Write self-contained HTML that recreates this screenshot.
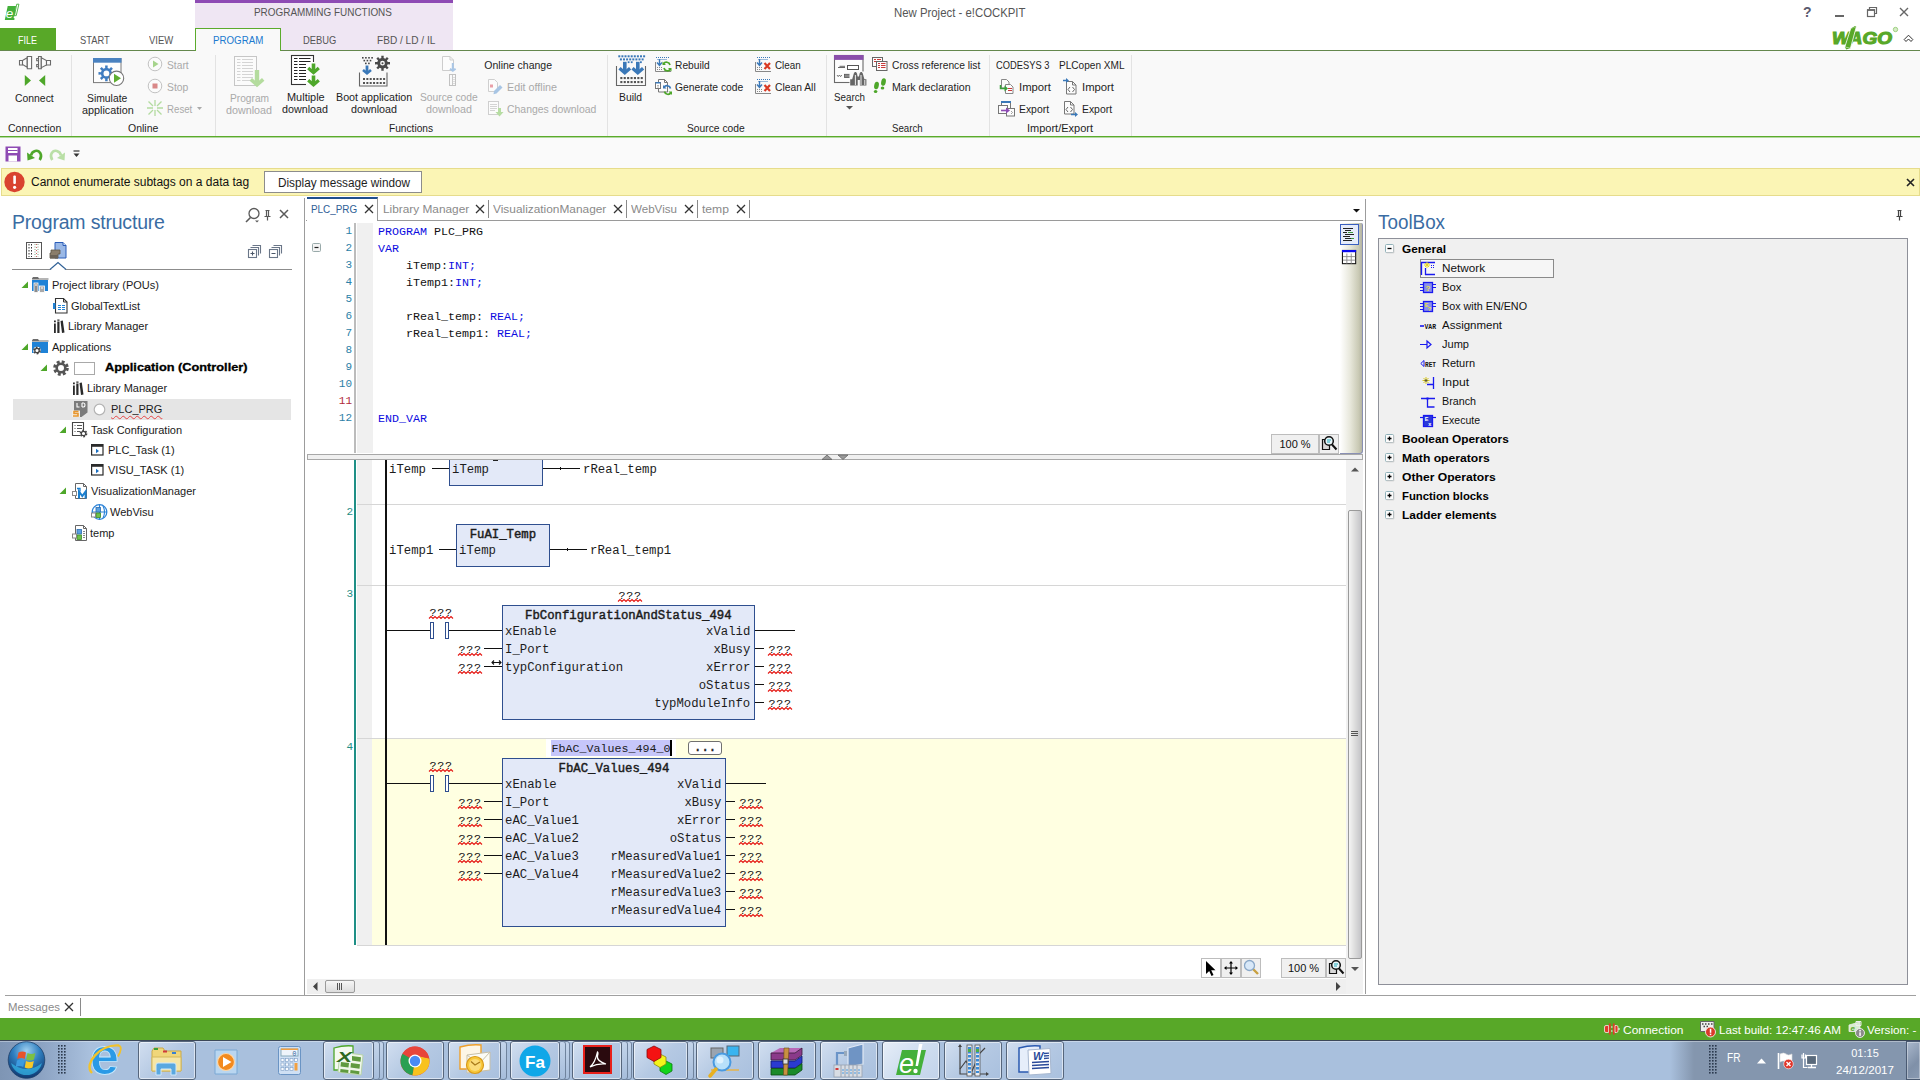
<!DOCTYPE html>
<html lang="en">
<head>
<meta charset="utf-8">
<title>New Project - e!COCKPIT</title>
<style>
*{box-sizing:border-box;margin:0;padding:0}
html,body{width:1920px;height:1080px;overflow:hidden;background:#fff}
body{position:relative;font-family:"Liberation Sans",sans-serif;font-size:12px;color:#222}
.a{position:absolute;white-space:nowrap}
.t{position:absolute;white-space:nowrap;line-height:14px;font-size:12px;color:#1e1e1e;transform:scaleX(.9);transform-origin:0 0}
.t.c{transform-origin:50% 0}
.g{color:#a9a9a9}
.c{text-align:center}
.mono{font-family:"Liberation Mono",monospace}
svg{position:absolute;overflow:visible}
/* ribbon */
#ribbon{left:0;top:51px;width:1920px;height:87px;background:#f9f9f9;border-bottom:1px solid #b4d9a0;box-shadow:inset 0 -1px 0 #5bab2c}
.rsep{position:absolute;top:55px;width:1px;height:81px;background:#e3e3e3}
.tab{position:absolute;top:33px;font-size:12px;line-height:14px;color:#555;white-space:nowrap;transform:scaleX(.84);transform-origin:0 0}
.grp{position:absolute;top:121px;font-size:12px;line-height:14px;color:#1e1e1e;white-space:nowrap;text-align:center;transform:scaleX(.9)}
/* code */
.ln{position:absolute;left:321px;width:31px;text-align:right;font-family:"Liberation Mono",monospace;font-size:11px;line-height:17px;color:#2b7fa8}
.cl{position:absolute;left:378px;font-family:"Liberation Mono",monospace;font-size:11.67px;line-height:17px;color:#111;white-space:pre}
.kw{color:#0c0ce0}
.lt{position:absolute;font-family:"Liberation Mono",monospace;font-size:12.3px;line-height:16px;color:#1c1c1c;white-space:pre}
.q{position:absolute;font-family:"Liberation Mono",monospace;font-size:11.67px;letter-spacing:.8px;line-height:16px;color:#111;white-space:pre}
.tr{position:absolute;font-size:11px;line-height:14px;color:#1a1a1a;white-space:nowrap}
.tb{position:absolute;font-size:11.5px;line-height:14px;color:#111;white-space:nowrap}
.tbb{position:absolute;font-size:11.5px;line-height:14px;color:#000;white-space:nowrap;font-weight:bold}
</style>
</head>
<body>
<!-- TITLE BAR -->
<div class="a" id="ctx" style="left:195px;top:0;width:258px;height:51px;background:#efe6f3;border-top:3px solid #8e4bb4"></div>
<div class="a" style="left:0;top:50px;width:1920px;height:1px;background:#64874d"></div>
<!-- tabs -->
<div class="a" style="left:0;top:28px;width:56px;height:22px;background:#58a828"></div>
<div class="a" style="left:195px;top:28px;width:86px;height:23px;background:#f9f9f9;border:1px solid #5bab2c;border-bottom:none"></div>
<!-- RIBBON BODY -->
<div class="a" id="ribbon"></div>
<!--RICONS-START--><div class="rsep" style="left:71px"></div>
<div class="rsep" style="left:215px"></div>
<div class="rsep" style="left:607px"></div>
<div class="rsep" style="left:826px"></div>
<div class="rsep" style="left:989px"></div>
<div class="rsep" style="left:1131px"></div>
<svg style="left:0;top:51px" width="1140" height="86" viewBox="0 51 1140 86"><g fill="#fbfbfb" stroke="#6a6a6a" stroke-width="1.100"><path d="M19.500 60.500h3v4.500h-3z"/><path d="M22.500 60.500l4.700-2.700v9.400l-4.700-2.700z"/><path d="M27.300 56.500h4.300v12.200h-4.300z"/><path d="M38.500 56.500h2.800v12.200h-2.800z"/><path d="M36.700 58.500h1.800v2.200h-1.800zM36.700 64.500h1.800v2.200h-1.800z"/><path d="M41.300 57.800l5.200 2.700v4.500l-5.200 2.700z"/><path d="M46.500 60.500h4v4.500h-4z"/></g><path d="M24.800 75v11l6.200-5.500z M45.200 75v11l-6.200-5.500z" fill="#4ea72a"/><rect x="93.500" y="58.600" width="27.500" height="24" fill="#fdfdfd" stroke="#7a7a7a"/><rect x="93" y="58" width="28.500" height="4.700" fill="#4a82c0"/><path d="M111.87 72.20 L114.30 72.11 L114.30 74.69 L111.87 74.60 L111.12 76.42 L112.90 78.07 L111.07 79.90 L109.42 78.12 L107.60 78.87 L107.69 81.30 L105.11 81.30 L105.20 78.87 L103.38 78.12 L101.73 79.90 L99.90 78.07 L101.68 76.42 L100.93 74.60 L98.50 74.69 L98.50 72.11 L100.93 72.20 L101.68 70.38 L99.90 68.73 L101.73 66.90 L103.38 68.68 L105.20 67.93 L105.11 65.50 L107.69 65.50 L107.60 67.93 L109.42 68.68 L111.07 66.90 L112.90 68.73 L111.12 70.38z M109.30 73.40 A2.9 2.9 0 1 0 103.50 73.40 A2.9 2.9 0 1 0 109.30 73.40z" fill="#3f7cc0" fill-rule="evenodd"/><circle cx="116.500" cy="78.300" r="7.200" fill="#fff" stroke="#777" stroke-width="1.100"/><path d="M114 73.800v9l7-4.500z" fill="#5fae30"/><rect x="234.500" y="56.500" width="22" height="29" fill="#fbfbfb" stroke="#c6c6c6"/><g stroke="#d4d4d4" stroke-width="1"><path d="M237 59.500h3.500M242 59.500h11"/><path d="M237 62.500h3.500M242 62.500h11"/><path d="M237 65.500h3.500M242 65.500h11"/><path d="M237 68.500h3.500M242 68.500h11"/><path d="M237 71.500h3.500M242 71.500h11"/><path d="M237 74.500h3.500M242 74.500h11"/><path d="M237 77.500h3.500M242 77.500h11"/><path d="M237 80.500h3.500M242 80.500h11"/></g><rect x="254.80" y="70.00" width="4.4" height="14.50" fill="#b4dc9e"/><path d="M250.80 79.30L257.00 84.80L263.20 79.30" fill="none" stroke="#b4dc9e" stroke-width="3.6"/><rect x="291.500" y="55.500" width="22" height="29" fill="#fff" stroke="#333" stroke-width="1.100"/><g stroke="#222" stroke-width="1.100"><path d="M294 58.500h3.500M299 58.500h11.500"/><path d="M294 61.500h3.500M299 61.500h11.500"/><path d="M294 64.500h3.500M299 64.500h11.500"/><path d="M294 67.500h3.500M299 67.500h11.500"/><path d="M294 70.500h3.500M299 70.500h11.500"/><path d="M294 73.500h3.500M299 73.500h11.500"/><path d="M294 76.500h3.500M299 76.500h11.500"/><path d="M294 79.500h3.500M299 79.500h11.500"/></g><rect x="306" y="62" width="15" height="25" fill="#f9f9f9"/><rect x="306" y="62" width="7.500" height="22" fill="#fff"/><rect x="311.70" y="63.50" width="3.6" height="8.80" fill="#4ea72a"/><path d="M308.20 68.00L313.50 72.60L318.80 68.00" fill="none" stroke="#4ea72a" stroke-width="3.2"/><rect x="311.70" y="75.50" width="3.6" height="9.00" fill="#4ea72a"/><path d="M308.20 80.20L313.50 84.80L318.80 80.20" fill="none" stroke="#4ea72a" stroke-width="3.2"/><rect x="362.00" y="57.0" width="1.6" height="1.6" fill="#444"/><rect x="365.10" y="57.0" width="1.6" height="1.6" fill="#444"/><rect x="368.20" y="57.0" width="1.6" height="1.6" fill="#444"/><rect x="371.30" y="57.0" width="1.6" height="1.6" fill="#444"/><rect x="363.50" y="59.8" width="1.6" height="1.6" fill="#444"/><rect x="366.60" y="59.8" width="1.6" height="1.6" fill="#444"/><rect x="369.70" y="59.8" width="1.6" height="1.6" fill="#444"/><rect x="365.00" y="62.6" width="1.6" height="1.6" fill="#444"/><rect x="368.10" y="62.6" width="1.6" height="1.6" fill="#444"/><rect x="365.60" y="65.50" width="2.8" height="7.50" fill="#3a78b8"/><path d="M363.00 70.00L367.00 73.30L371.00 70.00" fill="none" stroke="#3a78b8" stroke-width="2.6"/><path d="M387.68 62.06 L390.00 61.97 L390.00 64.43 L387.68 64.34 L386.96 66.06 L388.67 67.64 L386.94 69.37 L385.36 67.66 L383.64 68.38 L383.73 70.70 L381.27 70.70 L381.36 68.38 L379.64 67.66 L378.06 69.37 L376.33 67.64 L378.04 66.06 L377.32 64.34 L375.00 64.43 L375.00 61.97 L377.32 62.06 L378.04 60.34 L376.33 58.76 L378.06 57.03 L379.64 58.74 L381.36 58.02 L381.27 55.70 L383.73 55.70 L383.64 58.02 L385.36 58.74 L386.94 57.03 L388.67 58.76 L386.96 60.34z M384.90 63.20 A2.4 2.4 0 1 0 380.10 63.20 A2.4 2.4 0 1 0 384.90 63.20z" fill="#4a4a4a" fill-rule="evenodd"/><circle cx="382.500" cy="63.200" r="1" fill="#4a4a4a"/><path d="M359.500 72.500V86h27.500V72.500" fill="none" stroke="#666" stroke-width="1.100"/><rect x="363.00" y="78" width="2" height="2" fill="#555"/><rect x="366.35" y="78" width="2" height="2" fill="#555"/><rect x="369.70" y="78" width="2" height="2" fill="#555"/><rect x="373.05" y="78" width="2" height="2" fill="#555"/><rect x="376.40" y="78" width="2" height="2" fill="#555"/><rect x="379.75" y="78" width="2" height="2" fill="#555"/><rect x="383.10" y="78" width="2" height="2" fill="#555"/><rect x="363.00" y="82" width="2" height="2" fill="#555"/><rect x="366.35" y="82" width="2" height="2" fill="#555"/><rect x="369.70" y="82" width="2" height="2" fill="#555"/><rect x="373.05" y="82" width="2" height="2" fill="#555"/><rect x="376.40" y="82" width="2" height="2" fill="#555"/><rect x="379.75" y="82" width="2" height="2" fill="#555"/><rect x="383.10" y="82" width="2" height="2" fill="#555"/><path d="M442.500 56.500h7.500l3.500 3.500v10.500h-11z" fill="#fcfcfc" stroke="#cdcdcd"/><path d="M450 56.500v3.500h3.500" fill="none" stroke="#cdcdcd"/><rect x="451.80" y="63.00" width="2" height="7.50" fill="#a9c6e6"/><path d="M450.00 68.70L452.80 70.80L455.60 68.70" fill="none" stroke="#a9c6e6" stroke-width="2"/><rect x="449.500" y="74.500" width="6" height="11" fill="#fafafa" stroke="#c2c2c2"/><path d="M452.500 75v10" stroke="#c8c8c8"/><path d="M453 77.500h2M453 79.500h2M453 81.500h2M453 83.500h2" stroke="#d0d0d0" stroke-width=".7"/><rect x="618.30" y="55.3" width="2" height="2" fill="#3a78b8"/><rect x="621.40" y="55.3" width="2" height="2" fill="#3a78b8"/><rect x="624.50" y="55.3" width="2" height="2" fill="#3a78b8"/><rect x="627.60" y="55.3" width="2" height="2" fill="#3a78b8"/><rect x="630.70" y="55.3" width="2" height="2" fill="#3a78b8"/><rect x="633.80" y="55.3" width="2" height="2" fill="#3a78b8"/><rect x="636.90" y="55.3" width="2" height="2" fill="#3a78b8"/><rect x="640.00" y="55.3" width="2" height="2" fill="#3a78b8"/><rect x="643.10" y="55.3" width="2" height="2" fill="#3a78b8"/><rect x="619.90" y="58.4" width="2" height="2" fill="#3a78b8"/><rect x="623.00" y="58.4" width="2" height="2" fill="#3a78b8"/><rect x="626.10" y="58.4" width="2" height="2" fill="#3a78b8"/><rect x="629.20" y="58.4" width="2" height="2" fill="#3a78b8"/><rect x="632.30" y="58.4" width="2" height="2" fill="#3a78b8"/><rect x="635.40" y="58.4" width="2" height="2" fill="#3a78b8"/><rect x="638.50" y="58.4" width="2" height="2" fill="#3a78b8"/><rect x="641.60" y="58.4" width="2" height="2" fill="#3a78b8"/><rect x="627.70" y="61.3" width="1.8" height="1.8" fill="#3a78b8"/><rect x="630.80" y="61.3" width="1.8" height="1.8" fill="#3a78b8"/><rect x="640.00" y="61.3" width="1.8" height="1.8" fill="#3a78b8"/><rect x="623.00" y="61.80" width="3.6" height="10.70" fill="#3a78b8"/><path d="M619.50 68.20L624.80 72.80L630.10 68.20" fill="none" stroke="#3a78b8" stroke-width="3.3"/><rect x="636.00" y="61.80" width="3.6" height="10.70" fill="#3a78b8"/><path d="M632.50 68.20L637.80 72.80L643.10 68.20" fill="none" stroke="#3a78b8" stroke-width="3.3"/><path d="M616.500 66V85.500h29V66" fill="none" stroke="#666" stroke-width="1.100"/><rect x="620.30" y="77" width="2.1" height="2.1" fill="#555"/><rect x="623.70" y="77" width="2.1" height="2.1" fill="#555"/><rect x="627.10" y="77" width="2.1" height="2.1" fill="#555"/><rect x="630.50" y="77" width="2.1" height="2.1" fill="#555"/><rect x="633.90" y="77" width="2.1" height="2.1" fill="#555"/><rect x="637.30" y="77" width="2.1" height="2.1" fill="#555"/><rect x="640.70" y="77" width="2.1" height="2.1" fill="#555"/><rect x="620.30" y="81" width="2.1" height="2.1" fill="#555"/><rect x="623.70" y="81" width="2.1" height="2.1" fill="#555"/><rect x="627.10" y="81" width="2.1" height="2.1" fill="#555"/><rect x="630.50" y="81" width="2.1" height="2.1" fill="#555"/><rect x="633.90" y="81" width="2.1" height="2.1" fill="#555"/><rect x="637.30" y="81" width="2.1" height="2.1" fill="#555"/><rect x="640.70" y="81" width="2.1" height="2.1" fill="#555"/><rect x="834.500" y="55.500" width="28.500" height="27" fill="#fdfdfd" stroke="#6a6a6a" stroke-width="1.100"/><rect x="834" y="55" width="29.500" height="4.900" fill="#8a4fab"/><path d="M838 67.500h7M839.500 66.300h5.500" stroke="#555" stroke-width=".9"/><rect x="847.500" y="65.500" width="11" height="4" fill="#fff" stroke="#555" stroke-width="1"/><path d="M837 75l1.200 1.600 1.200-1.600 1.200 1.600 1.200-1.600" fill="none" stroke="#555" stroke-width=".8"/><rect x="844.500" y="74.300" width="6.500" height="3.200" fill="#8a8a8a" stroke="#555" stroke-width=".8"/><rect x="849.500" y="71.500" width="17" height="15" fill="#f9f9f9"/><path d="M850.200 85.600v-6.300h2l1.600-5.800 1-1.500h1.200l1 1.500.6 3h1.400l.6-3 1-1.500h1.200l1 1.500 1.600 5.800h2v6.300h-6.500v-5.500h-2.200v5.500z" fill="#666"/><path d="M855.400 75v10M861 75v10M864.800 80v5" stroke="#fff" stroke-width=".9"/></svg>
<svg style="left:147px;top:56px" width="16" height="16" viewBox="0 0 16 16"><circle cx="8" cy="8" r="6.800" fill="#fbfbfb" stroke="#c2c2c2"/><path d="M6 4.500v7l5.500-3.500z" fill="#a6d48c"/></svg>
<svg style="left:147px;top:78px" width="16" height="16" viewBox="0 0 16 16"><circle cx="8" cy="8" r="6.800" fill="#fbfbfb" stroke="#c2c2c2"/><rect x="5.500" y="5.500" width="5" height="5" fill="#d98888"/></svg>
<svg style="left:147px;top:100px" width="16" height="16" viewBox="0 0 16 16"><g stroke="#b3dba0" stroke-width="1.300"><path d="M8 0v6M8 10v6M0 8h6M10 8h6M1.500 1.500l4.500 4.500M10 10l4.500 4.500M14.500 1.500l-4.500 4.500M6 10l-4.500 4.500"/></g></svg>
<svg style="left:197px;top:107px" width="6" height="4"><path d="M0 0h5l-2.500 3z" fill="#aaa"/></svg>
<svg style="left:487px;top:78px" width="18" height="18" viewBox="0 0 18 18"><path d="M1.500 1.500h6l3 3v9h-9z" fill="#fcfcfc" stroke="#cfcfcf"/><rect x="3" y="6.500" width="3" height="3" fill="#e9a0a8"/><path d="M7 13l6-6 2.500 2.500-6 6-3 .8z" fill="#a8c5e4"/></svg>
<svg style="left:487px;top:100px" width="18" height="18" viewBox="0 0 18 18"><rect x="1.500" y="1.500" width="10" height="13" fill="#fcfcfc" stroke="#cfcfcf"/><path d="M3 4.500h7M3 6.500h7M3 8.500h7M3 10.500h5" stroke="#d4d4d4"/><path d="M11 8h3v4h2.500l-4 4.500-4-4.500H11z" fill="#b7dda3"/></svg>
<svg style="left:846px;top:106px" width="8" height="4"><path d="M0 0h7l-3.500 3.500z" fill="#555"/></svg>

<svg style="left:655px;top:56px" width="17" height="17" viewBox="0 0 17 17"><path d="M1 1.500h13M2.500 3.500h10" stroke="#3a78b8" stroke-dasharray="1 1"/><path d="M4.500 3v6M2 6.500l2.500 3 2.500-3" fill="none" stroke="#3a78b8" stroke-width="1.400"/><path d="M.5 6v9.500h15.500" fill="none" stroke="#888"/><path d="M2 11.500h5M2 13.500h5" stroke="#888" stroke-dasharray="1 1"/><path d="M15 9a3.500 3.500 0 0 0-6.500-1M9 12a3.500 3.500 0 0 0 6.500 1" fill="none" stroke="#4ea72a" stroke-width="1.700"/><path d="M7.500 5.500v3.500h3.500zM16.500 15.500v-3.500h-3.500z" fill="#4ea72a"/></svg>
<svg style="left:655px;top:78px" width="17" height="17" viewBox="0 0 17 17"><path d="M3.500 1.500h6l3 3v9.500h-9z" fill="#fcfcfc" stroke="#777"/><path d="M9.500 1.500v3h3" fill="none" stroke="#777"/><rect x=".5" y="4.500" width="5" height="6" fill="#fff" stroke="#777"/><rect x=".5" y="4" width="5" height="1.500" fill="#3a78b8"/><path d="M2 7.500h2M2 9h2" stroke="#999" stroke-width=".7"/><path d="M15.500 10.500a3.500 3.500 0 0 0-6.500-1" fill="none" stroke="#3a78b8" stroke-width="1.700"/><path d="M9.500 13.500a3.500 3.500 0 0 0 6.500 1" fill="none" stroke="#4ea72a" stroke-width="1.700"/><path d="M8 7v3.500h3.500z" fill="#3a78b8"/><path d="M17 17v-3.500h-3.500z" fill="#4ea72a"/></svg>
<svg style="left:754px;top:56px" width="17" height="17" viewBox="0 0 17 17"><path d="M3 1.500h13M4.500 3.500h10" stroke="#3a78b8" stroke-dasharray="1 1"/><path d="M5.500 3v6M3 6.500l2.500 3 2.500-3" fill="none" stroke="#3a78b8" stroke-width="1.400"/><path d="M1.500 6v9.500h15.500" fill="none" stroke="#888"/><path d="M3 11.500h5M3 13.500h5" stroke="#888" stroke-dasharray="1 1"/><path d="M10.500 7l5.500 6M16 7l-5.500 6" stroke="#d93a24" stroke-width="2.200"/></svg>
<svg style="left:754px;top:78px" width="17" height="17" viewBox="0 0 17 17"><path d="M3 1.500h13M4.500 3.500h10" stroke="#3a78b8" stroke-dasharray="1 1"/><path d="M5.500 3v6M3 6.500l2.500 3 2.500-3" fill="none" stroke="#3a78b8" stroke-width="1.400"/><path d="M1.500 6v9.500h15.500" fill="none" stroke="#888"/><path d="M3 11.500h5M3 13.500h5" stroke="#888" stroke-dasharray="1 1"/><path d="M10.500 7l5.500 6M16 7l-5.500 6" stroke="#d93a24" stroke-width="2.200"/></svg>
<svg style="left:872px;top:56px" width="17" height="16" viewBox="0 0 17 16"><rect x=".5" y="1.500" width="10" height="9" fill="#fcfcfc" stroke="#666"/><path d="M2 3.500h2M5 3.500h4M2 5.500h2" stroke="#c83a3a"/><rect x="4.500" y="5.500" width="10.500" height="9" fill="#fcfcfc" stroke="#666"/><path d="M6 7.500h2M9 7.500h4.500M6 9.500h2M9 9.500h4.500M6 11.500h2M9 11.500h4.500" stroke="#c83a3a"/></svg>
<svg style="left:873px;top:78px" width="15" height="16" viewBox="0 0 15 16"><ellipse cx="3.500" cy="7.500" rx="2.300" ry="3.800" fill="#4ea72a" transform="rotate(12 3.500 7.500)"/><ellipse cx="2.600" cy="13.500" rx="1.800" ry="1.600" fill="#4ea72a"/><ellipse cx="10.500" cy="4" rx="2.300" ry="3.800" fill="#4ea72a" transform="rotate(12 10.500 4)"/><ellipse cx="9.500" cy="10" rx="1.800" ry="1.600" fill="#4ea72a"/></svg>
<svg style="left:999px;top:78px" width="17" height="17" viewBox="0 0 17 17"><path d="M2.500 1.500h5l2.500 2.500v6h-7.500z" fill="#fcfcfc" stroke="#888"/><path d="M6.500 6.500h5l2.500 2.500v6.500h-7.500z" fill="#fcfcfc" stroke="#888"/><path d="M9 10.500h4M9 12.500h4" stroke="#c83a3a" stroke-width="1.200"/><path d="M1.500 7v3.500h5" fill="none" stroke="#3aa03a" stroke-width="1.500"/><path d="M5.500 7.500l3.500 3-3.500 3z" fill="#3aa03a"/></svg>
<svg style="left:998px;top:100px" width="18" height="17" viewBox="0 0 18 17"><rect x="3.500" y="1.500" width="9" height="7" fill="#fcfcfc" stroke="#777"/><rect x="3" y="1" width="10" height="2" fill="#3a78b8"/><rect x=".5" y="5.500" width="9" height="8" fill="#fcfcfc" stroke="#777"/><rect x="8.500" y="8.500" width="8" height="7.500" fill="#fcfcfc" stroke="#777"/><path d="M3 10.500h6" stroke="#8e4bb4" stroke-width="1.600"/><path d="M8 7.500l4 3-4 3z" fill="#8e4bb4"/><path d="M13 11l1.500 1.500L13 14" fill="none" stroke="#888" stroke-width=".8"/></svg>
<svg style="left:1062px;top:78px" width="17" height="17" viewBox="0 0 17 17"><path d="M4.500 3.500h6l3.500 3.500v9h-9.500z" fill="#fcfcfc" stroke="#777"/><path d="M10.500 3.500v3.500h3.500" fill="none" stroke="#777"/><path d="M8 9l-2 2.500 2 2.500M10.500 9l2 2.500-2 2.500" fill="none" stroke="#666" stroke-width="1"/><path d="M1 2.500h4" stroke="#3a78b8" stroke-width="1.500"/><path d="M4 0l3 2.500-3 2.500z" fill="#3a78b8"/></svg>
<svg style="left:1062px;top:100px" width="17" height="17" viewBox="0 0 17 17"><path d="M2.500 1.500h6l3.500 3.500v9h-9.500z" fill="#fcfcfc" stroke="#777"/><path d="M8.500 1.500v3.500h3.500" fill="none" stroke="#777"/><path d="M6 7l-2 2.500 2 2.500M8.500 7l2 2.500-2 2.500" fill="none" stroke="#666" stroke-width="1"/><path d="M9 14.500h5" stroke="#3a78b8" stroke-width="1.500"/><path d="M13 12l3 2.500-3 2.500z" fill="#3a78b8"/></svg>

<!--RICONS-END--><!--RTEXT-START--><div class="a" style="left:254.3px;top:5px;font-size:11.3px;line-height:14px;color:#555;transform:scaleX(0.879);transform-origin:0 0">PROGRAMMING FUNCTIONS</div>
<div class="a" style="left:894.3px;top:6px;font-size:12.5px;line-height:14px;color:#555;transform:scaleX(0.91);transform-origin:0 0">New Project - e!COCKPIT</div>
<div class="a" style="left:18.3px;top:33px;font-size:11.3px;line-height:14px;color:#fff;transform:scaleX(0.796);transform-origin:0 0">FILE</div>
<div class="a" style="left:79.7px;top:33px;font-size:11.3px;line-height:14px;color:#555;transform:scaleX(0.825);transform-origin:0 0">START</div>
<div class="a" style="left:149.0px;top:33px;font-size:11.3px;line-height:14px;color:#555;transform:scaleX(0.841);transform-origin:0 0">VIEW</div>
<div class="a" style="left:213.0px;top:33px;font-size:11.3px;line-height:14px;color:#2079cf;transform:scaleX(0.861);transform-origin:0 0">PROGRAM</div>
<div class="a" style="left:302.7px;top:33px;font-size:11.3px;line-height:14px;color:#555;transform:scaleX(0.829);transform-origin:0 0">DEBUG</div>
<div class="a" style="left:377.0px;top:33px;font-size:11.3px;line-height:14px;color:#555;transform:scaleX(0.893);transform-origin:0 0">FBD / LD / IL</div>
<div class="a" style="left:15.3px;top:91px;font-size:10.5px;line-height:14px;color:#1e1e1e;transform:scaleX(0.99);transform-origin:0 0">Connect</div>
<div class="a" style="left:8.3px;top:121px;font-size:10.5px;line-height:14px;color:#1e1e1e;transform:scaleX(1.003);transform-origin:0 0">Connection</div>
<div class="a" style="left:87.3px;top:91px;font-size:10.5px;line-height:14px;color:#1e1e1e;transform:scaleX(0.987);transform-origin:0 0">Simulate</div>
<div class="a" style="left:82.3px;top:103px;font-size:10.5px;line-height:14px;color:#1e1e1e;transform:scaleX(1.03);transform-origin:0 0">application</div>
<div class="a" style="left:167.3px;top:58px;font-size:10.5px;line-height:14px;color:#a9a9a9;transform:scaleX(0.979);transform-origin:0 0">Start</div>
<div class="a" style="left:167.3px;top:80px;font-size:10.5px;line-height:14px;color:#a9a9a9;transform:scaleX(0.986);transform-origin:0 0">Stop</div>
<div class="a" style="left:167.3px;top:102px;font-size:10.5px;line-height:14px;color:#a9a9a9;transform:scaleX(0.922);transform-origin:0 0">Reset</div>
<div class="a" style="left:128.3px;top:121px;font-size:10.5px;line-height:14px;color:#1e1e1e;transform:scaleX(0.998);transform-origin:0 0">Online</div>
<div class="a" style="left:229.7px;top:91px;font-size:10.5px;line-height:14px;color:#a9a9a9;transform:scaleX(0.969);transform-origin:0 0">Program</div>
<div class="a" style="left:226.3px;top:103px;font-size:10.5px;line-height:14px;color:#a9a9a9;transform:scaleX(1.023);transform-origin:0 0">download</div>
<div class="a" style="left:286.7px;top:90px;font-size:10.5px;line-height:14px;color:#1e1e1e;transform:scaleX(1.042);transform-origin:0 0">Multiple</div>
<div class="a" style="left:282.3px;top:102px;font-size:10.5px;line-height:14px;color:#1e1e1e;transform:scaleX(1.023);transform-origin:0 0">download</div>
<div class="a" style="left:335.7px;top:90px;font-size:10.5px;line-height:14px;color:#1e1e1e;transform:scaleX(1.021);transform-origin:0 0">Boot application</div>
<div class="a" style="left:350.8px;top:102px;font-size:10.5px;line-height:14px;color:#1e1e1e;transform:scaleX(1.023);transform-origin:0 0">download</div>
<div class="a" style="left:420.3px;top:90px;font-size:10.5px;line-height:14px;color:#a9a9a9;transform:scaleX(0.979);transform-origin:0 0">Source code</div>
<div class="a" style="left:426.2px;top:102px;font-size:10.5px;line-height:14px;color:#a9a9a9;transform:scaleX(1.023);transform-origin:0 0">download</div>
<div class="a" style="left:484.3px;top:58px;font-size:10.5px;line-height:14px;color:#1e1e1e;transform:scaleX(1.0);transform-origin:0 0">Online change</div>
<div class="a" style="left:507.3px;top:80px;font-size:10.5px;line-height:14px;color:#a9a9a9;transform:scaleX(1.024);transform-origin:0 0">Edit offline</div>
<div class="a" style="left:507.3px;top:102px;font-size:10.5px;line-height:14px;color:#a9a9a9;transform:scaleX(0.993);transform-origin:0 0">Changes download</div>
<div class="a" style="left:388.7px;top:121px;font-size:10.5px;line-height:14px;color:#1e1e1e;transform:scaleX(0.967);transform-origin:0 0">Functions</div>
<div class="a" style="left:619.3px;top:90px;font-size:10.5px;line-height:14px;color:#1e1e1e;transform:scaleX(0.985);transform-origin:0 0">Build</div>
<div class="a" style="left:675.3px;top:58px;font-size:10.5px;line-height:14px;color:#1e1e1e;transform:scaleX(0.975);transform-origin:0 0">Rebuild</div>
<div class="a" style="left:675.3px;top:80px;font-size:10.5px;line-height:14px;color:#1e1e1e;transform:scaleX(0.983);transform-origin:0 0">Generate code</div>
<div class="a" style="left:775.3px;top:58px;font-size:10.5px;line-height:14px;color:#1e1e1e;transform:scaleX(0.937);transform-origin:0 0">Clean</div>
<div class="a" style="left:775.3px;top:80px;font-size:10.5px;line-height:14px;color:#1e1e1e;transform:scaleX(0.982);transform-origin:0 0">Clean All</div>
<div class="a" style="left:687.3px;top:121px;font-size:10.5px;line-height:14px;color:#1e1e1e;transform:scaleX(0.979);transform-origin:0 0">Source code</div>
<div class="a" style="left:834.3px;top:90px;font-size:10.5px;line-height:14px;color:#1e1e1e;transform:scaleX(0.932);transform-origin:0 0">Search</div>
<div class="a" style="left:892.3px;top:58px;font-size:10.5px;line-height:14px;color:#1e1e1e;transform:scaleX(0.976);transform-origin:0 0">Cross reference list</div>
<div class="a" style="left:892.3px;top:80px;font-size:10.5px;line-height:14px;color:#1e1e1e;transform:scaleX(1.014);transform-origin:0 0">Mark declaration</div>
<div class="a" style="left:892.3px;top:121px;font-size:10.5px;line-height:14px;color:#1e1e1e;transform:scaleX(0.923);transform-origin:0 0">Search</div>
<div class="a" style="left:996.0px;top:58px;font-size:10.5px;line-height:14px;color:#1e1e1e;transform:scaleX(0.888);transform-origin:0 0">CODESYS 3</div>
<div class="a" style="left:1059.4px;top:58px;font-size:10.5px;line-height:14px;color:#1e1e1e;transform:scaleX(0.959);transform-origin:0 0">PLCopen XML</div>
<div class="a" style="left:1018.7px;top:80px;font-size:10.5px;line-height:14px;color:#1e1e1e;transform:scaleX(1.075);transform-origin:0 0">Import</div>
<div class="a" style="left:1019.0px;top:102px;font-size:10.5px;line-height:14px;color:#1e1e1e;transform:scaleX(0.989);transform-origin:0 0">Export</div>
<div class="a" style="left:1081.7px;top:80px;font-size:10.5px;line-height:14px;color:#1e1e1e;transform:scaleX(1.075);transform-origin:0 0">Import</div>
<div class="a" style="left:1082.0px;top:102px;font-size:10.5px;line-height:14px;color:#1e1e1e;transform:scaleX(0.989);transform-origin:0 0">Export</div>
<div class="a" style="left:1026.7px;top:121px;font-size:10.5px;line-height:14px;color:#1e1e1e;transform:scaleX(1.047);transform-origin:0 0">Import/Export</div>
<!--RTEXT-END--><svg style="left:4px;top:3px" width="17" height="18" viewBox="0 0 17 18"><path d="M3.700 3h8.300l-1.700 14H.8z" fill="#44b03a"/><text x="1.800" y="14.600" font-size="13" font-style="italic" fill="#fff" font-family="Liberation Sans,sans-serif" textLength="7.500" lengthAdjust="spacingAndGlyphs">e</text><path d="M12.700 1.200h2.200l-2.700 11.500h-1.700z" fill="#fff" stroke="#44b03a" stroke-width=".9"/><circle cx="10.600" cy="14.300" r="1" fill="#fff"/></svg>
<div class="a" style="left:1803px;top:4px;font-size:14px;line-height:16px;font-weight:bold;color:#5a5a6e">?</div>
<div class="a" style="left:1835px;top:15px;width:9px;height:2px;background:#666"></div>
<svg style="left:1866px;top:6px" width="12" height="12" viewBox="0 0 12 12"><path d="M3.500 3.500v-2h7v6h-2" fill="none" stroke="#666" stroke-width="1.200"/><rect x="1.500" y="4" width="7" height="6.500" fill="#fff" stroke="#666" stroke-width="1.200"/><path d="M1 4h8" stroke="#666" stroke-width="1.600"/></svg>
<svg style="left:1899px;top:7px" width="10" height="10" viewBox="0 0 10 10"><path d="M1 1l8 8M9 1l-8 8" stroke="#666" stroke-width="1.400"/></svg>
<svg style="left:1830px;top:25px" width="70" height="26" viewBox="0 0 70 26"><text x="2" y="19" font-size="16.500" font-weight="bold" font-style="italic" fill="#58a828" stroke="#58a828" stroke-width="1.100" font-family="Liberation Sans,sans-serif" textLength="60" lengthAdjust="spacingAndGlyphs">WAGO</text><path d="M20.800 3.200l5.600-1.600-6 21.800-5.600-1.400z" fill="#58a828" stroke="#fff" stroke-width=".8"/><path d="M21 3.400l4-2.400 1.200 1zM20.200 23l-3.800 1.600-1.600-2.400z" fill="#58a828"/><circle cx="65.500" cy="4.500" r="2.200" fill="#d6ebc8" stroke="#8cc86a" stroke-width=".8"/></svg>
<svg style="left:1903px;top:34px" width="11" height="9" viewBox="0 0 11 9"><path d="M1.200 5.500L5.500 1.200 9.800 5.500 8 7.500 5.500 5 3 7.500z" fill="#fff" stroke="#333" stroke-width="1"/></svg>
<!--RIBBON-END-->
<!-- QUICK ACCESS -->
<div class="a" style="left:0;top:138px;width:1920px;height:30px;background:#fafafa"></div>
<svg style="left:5px;top:146px" width="16" height="16" viewBox="0 0 16 16"><rect x=".5" y=".5" width="15" height="15" fill="#8e4bb4"/><rect x="3" y="2" width="9.500" height="5" fill="#fff"/><path d="M3 4.500h9.500" stroke="#8e4bb4" stroke-width="1"/><rect x="3.500" y="9.500" width="8.500" height="6" fill="#fff"/><rect x="5" y="11" width="2" height="3.500" fill="#8e4bb4" opacity=".0"/></svg>
<svg style="left:27px;top:146px" width="17" height="16" viewBox="0 0 17 16"><path d="M4 9.500C5 4.500 11 3 13.500 7.500c1 2 .5 4.500-.8 6.500" fill="none" stroke="#4ea72a" stroke-width="2.600"/><path d="M0 6.500l8 5.500-7.500 2.500z" fill="#4ea72a"/></svg>
<svg style="left:48px;top:146px" width="17" height="16" viewBox="0 0 17 16"><path d="M13 9.500C12 4.500 6 3 3.500 7.500c-1 2-.5 4.500.8 6.500" fill="none" stroke="#b9dfa6" stroke-width="2.600"/><path d="M17 6.500l-8 5.500 7.500 2.500z" fill="#b9dfa6"/></svg>
<svg style="left:73px;top:150px" width="8" height="8" viewBox="0 0 8 8"><path d="M.5 1h6" stroke="#333" stroke-width="1.200"/><path d="M.5 3.500h6L3.500 7z" fill="#333"/></svg>

<!-- YELLOW BAR -->
<div class="a" style="left:1px;top:168px;width:1919px;height:28px;background:#fbf5b5;border:1px solid #e6dc8c"></div>
<svg style="left:4px;top:171px" width="22" height="22" viewBox="0 0 22 22"><circle cx="10.500" cy="11" r="10.200" fill="#d9432f"/><rect x="9.300" y="4.500" width="2.600" height="8.500" rx="1" fill="#fff"/><circle cx="10.600" cy="16.300" r="1.600" fill="#fff"/></svg>
<div class="a" style="left:31px;top:175px;font-size:12px;line-height:14px;color:#111">Cannot enumerate subtags on a data tag</div>
<div class="a" style="left:264px;top:171px;width:158px;height:22px;background:#fff;border:1px solid #8c8c8c"></div>
<div class="a" style="left:277.500px;top:176px;font-size:12.500px;line-height:15px;color:#1e1e1e;transform:scaleX(0.941);transform-origin:0 0">Display message window</div>
<svg style="left:1906px;top:178px" width="9" height="9" viewBox="0 0 9 9"><path d="M1 1l7 7M8 1l-7 7" stroke="#222" stroke-width="1.600"/></svg>

<!-- LEFT PANEL -->
<div class="a" style="left:304px;top:198px;width:1px;height:797px;background:#9c9c9c"></div>
<div class="a" style="left:12px;top:209px;font-size:20px;line-height:26px;color:#3a6ca3;transform:scaleX(.975);transform-origin:0 0;letter-spacing:-0.2px">Program structure</div>
<svg style="left:245px;top:207px" width="46" height="16" viewBox="0 0 46 16"><circle cx="9" cy="6.500" r="5" fill="none" stroke="#5a5a5a" stroke-width="1.300"/><path d="M5.500 10.500L1 15" stroke="#5a5a5a" stroke-width="1.600"/><path d="M10 13.500h4l-2 2z" fill="#5a5a5a"/><path d="M20.500 3.500h4M21.500 3.500v6M23.500 3.500v6M19.500 9.500h6M22.500 9.500v4" stroke="#5a5a5a" stroke-width="1.200" fill="none"/><path d="M35 3l8 8M43 3l-8 8" stroke="#5a5a5a" stroke-width="1.500"/></svg>
<!-- toolbar icons -->
<svg style="left:26px;top:242px" width="16" height="17" viewBox="0 0 16 17"><rect x=".5" y=".5" width="15" height="16" fill="#fff" stroke="#555"/><path d="M3 2v13M5.500 2v13" stroke="#333" stroke-dasharray="1.500 1.500"/><path d="M9 2v13M12 2v13" stroke="#8a8" stroke-dasharray="1 1.500"/><path d="M10.500 2v13" stroke="#c66" stroke-dasharray="1 2"/></svg>
<svg style="left:49px;top:241px" width="18" height="19" viewBox="0 0 18 19"><path d="M6 1.500h8l3 3v12.500H6z" fill="#9ab8e6" stroke="#2a5cb8"/><path d="M14 1.500v3h3" fill="#cfe0f6" stroke="#2a5cb8"/><path d="M2 9h9v4h-2v4H1v-5h1z" fill="#8a7d6b" stroke="#5e5548" stroke-width=".8"/><rect x="1" y="14" width="8" height="3.500" fill="#6b6257"/></svg>
<svg style="left:247px;top:244px" width="36" height="15" viewBox="0 0 36 15"><g fill="#fff" stroke="#6a7688" stroke-width="1.100"><path d="M5.500 1.500h8v8"/><path d="M3.500 3.500h8v8"/><rect x="1.500" y="5.500" width="8" height="8"/><path d="M26.500 1.500h8v8"/><path d="M24.500 3.500h8v8"/><rect x="22.500" y="5.500" width="8" height="8"/></g><path d="M3.500 9.500h4M5.500 7.500v4M24.500 9.500h4" stroke="#4a5668" stroke-width="1.100"/></svg>
<div class="a" style="left:12px;top:269px;width:280px;height:1px;background:#8c8c8c"></div>
<svg style="left:50px;top:261px" width="16" height="10" viewBox="0 0 16 10"><path d="M0 8.500l8-7 8 7" fill="#fff" stroke="#2f6096" stroke-width="1.200"/><path d="M1.500 8.500h13" stroke="#fff" stroke-width="1.500"/></svg>
<!-- tree -->
<div class="a" style="left:13px;top:399px;width:278px;height:21px;background:#e5e5e5"></div>
<svg style="left:21px;top:281px" width="8" height="8"><path d="M7 .5V7H.5z" fill="#4ea72a"/></svg>
<svg style="left:31px;top:276px" width="18" height="18" viewBox="0 0 18 18"><path d="M1 2.500l1-1.500h5l1 1.500h9.500v1H1z" fill="#6d6d6d"/><rect x="1" y="4" width="16" height="11" fill="#1f82d6"/><rect x="3" y="7" width="4" height="9.500" fill="#8c8c8c" stroke="#fff" stroke-width=".8"/><rect x="8.500" y="10" width="5" height="6.500" fill="#a9a9a9" stroke="#fff" stroke-width=".8"/><path d="M4 9h2M10 12h2" stroke="#fff"/></svg>
<div class="tr" style="left:52px;top:278px">Project library (POUs)</div>
<svg style="left:52px;top:297px" width="17" height="18" viewBox="0 0 17 18"><path d="M3.500 1.500h8l3.500 3.500v11h-11.500z" fill="#fff" stroke="#333" stroke-width="1.100"/><path d="M11.500 1.500v3.500h3.500" fill="none" stroke="#333"/><rect x="1" y="6" width="2.500" height="6" fill="#1f82d6"/><path d="M6 8.500h3M10 8.500h3M6 10.500h3M10 10.500h3M6 12.500h3M10 12.500h3" stroke="#1f82d6" stroke-width="1.200"/></svg>
<div class="tr" style="left:71px;top:299px">GlobalTextList</div>
<svg style="left:53px;top:319px" width="12" height="15" viewBox="0 0 12 15"><path d="M1 4.500h1.800v9.500H1zM1 1.500h1.800v1.800H1zM4.300 2.500h2.200v11.500H4.300zM4.300 0.500h2.200v1.200H4.300z M7.500 2l2.300-.5 1.700 12-2.500.5z" fill="#2a2a2a"/></svg>
<div class="tr" style="left:68px;top:319px">Library Manager</div>
<svg style="left:21px;top:343px" width="8" height="8"><path d="M7 .5V7H.5z" fill="#4ea72a"/></svg>
<svg style="left:31px;top:338px" width="18" height="18" viewBox="0 0 18 18"><path d="M1 2.500l1-1.500h5l1 1.500h9.500v1H1z" fill="#6d6d6d"/><rect x="1" y="4" width="16" height="11" fill="#1f82d6"/><circle cx="6" cy="12.500" r="3.800" fill="#fff"/><circle cx="6" cy="12.500" r="2.600" fill="none" stroke="#444" stroke-width="2.600" stroke-dasharray="1.500 1.220"/><circle cx="6" cy="12.500" r="2.200" fill="#fff" stroke="#444" stroke-width="1.300"/></svg>
<div class="tr" style="left:52px;top:340px">Applications</div>
<svg style="left:40px;top:364px" width="8" height="8"><path d="M7 .5V7H.5z" fill="#4ea72a"/></svg>
<svg style="left:52px;top:359px" width="18" height="18" viewBox="0 0 18 18"><circle cx="9" cy="9" r="5.800" fill="none" stroke="#555" stroke-width="4" stroke-dasharray="2.600 1.950"/><circle cx="9" cy="9" r="4.300" fill="none" stroke="#555" stroke-width="2.600"/></svg>
<div class="a" style="left:74px;top:362px;width:21px;height:13px;background:#fff;border:1px solid #a9a9a9"></div>
<div class="tr" style="left:105px;top:360px;font-weight:bold;font-size:11.500px;color:#000;transform:scaleX(1.110);transform-origin:0 0;-webkit-text-stroke:.3px #000">Application (Controller)</div>
<svg style="left:72px;top:381px" width="12" height="15" viewBox="0 0 12 15"><path d="M1 4.500h1.800v9.500H1zM1 1.500h1.800v1.800H1zM4.300 2.500h2.200v11.500H4.300zM4.300 0.500h2.200v1.200H4.300z M7.500 2l2.300-.5 1.700 12-2.500.5z" fill="#2a2a2a"/></svg>
<div class="tr" style="left:87px;top:381px">Library Manager</div>
<svg style="left:71px;top:400px" width="18" height="18" viewBox="0 0 18 18"><path d="M3 1h13.500v11.500l-6 4.500H8v-6H3z" fill="#7b7b7b"/><path d="M1 10.500h8v6.500H1z" fill="#f5f0e6"/><path d="M7.500 11.500h-4.500v2h4v2.500h-5" fill="none" stroke="#e8962e" stroke-width="1.600"/><path d="M6 3v4h2.500M11 3v4M11 3h1.500q1.500 0 1.500 2t-1.500 2H11" fill="none" stroke="#fff" stroke-width="1.100"/></svg>
<svg style="left:93px;top:403px" width="13" height="13"><circle cx="6.500" cy="6.500" r="5.300" fill="#fff" stroke="#b5b5b5" stroke-width="1.200"/></svg>
<div class="tr" style="left:111px;top:402px;text-decoration:underline wavy #e64545 1px;text-underline-offset:2px">PLC_PRG</div>
<svg style="left:59px;top:426px" width="8" height="8"><path d="M7 .5V7H.5z" fill="#4ea72a"/></svg>
<svg style="left:71px;top:421px" width="18" height="18" viewBox="0 0 18 18"><path d="M1.500 1.500h11v13h-11z" fill="#fff" stroke="#444" stroke-width="1.100"/><path d="M3.500 4.500h1M6 4.500h5M3.500 7.500h1M6 7.500h5M3.500 10.500h1M6 10.500h3" stroke="#555"/><circle cx="12.500" cy="12.500" r="3.600" fill="#fff"/><circle cx="12.500" cy="12.500" r="2.700" fill="none" stroke="#444" stroke-width="2.400" stroke-dasharray="1.500 1.330"/><circle cx="12.500" cy="12.500" r="2.200" fill="#fff" stroke="#444" stroke-width="1.200"/></svg>
<div class="tr" style="left:91px;top:423px">Task Configuration</div>
<svg style="left:91px;top:444px" width="13" height="12" viewBox="0 0 13 12"><rect x=".6" y=".6" width="11.400" height="10.400" fill="#fff" stroke="#2a2a2a" stroke-width="1.200"/><rect x=".5" y=".5" width="11.500" height="2.300" fill="#2a2a2a"/><path d="M5 4.800v4.400l3-2.200z" fill="#1a6fc4"/></svg>
<div class="tr" style="left:108px;top:443px">PLC_Task (1)</div>
<svg style="left:91px;top:464px" width="13" height="12" viewBox="0 0 13 12"><rect x=".6" y=".6" width="11.400" height="10.400" fill="#fff" stroke="#2a2a2a" stroke-width="1.200"/><rect x=".5" y=".5" width="11.500" height="2.300" fill="#2a2a2a"/><path d="M5 4.800v4.400l3-2.200z" fill="#1a6fc4"/></svg>
<div class="tr" style="left:108px;top:463px">VISU_TASK (1)</div>
<svg style="left:59px;top:487px" width="8" height="8"><path d="M7 .5V7H.5z" fill="#4ea72a"/></svg>
<svg style="left:71px;top:482px" width="18" height="18" viewBox="0 0 18 18"><path d="M4.500 1.500h8l3 3v12h-11z" fill="#fff" stroke="#666" stroke-width="1"/><path d="M12.500 1.500v3h3" fill="none" stroke="#666"/><rect x="1.500" y="9.500" width="4" height="4" fill="#fff" stroke="#888"/><path d="M6 6.500h3v3" fill="none" stroke="#1a7fd0" stroke-width="1.300"/><path d="M8 16.500v-7l3.300 4.500 3.300-4.500v7" fill="none" stroke="#1a7fd0" stroke-width="2"/></svg>
<div class="tr" style="left:91px;top:484px">VisualizationManager</div>
<svg style="left:90px;top:503px" width="18" height="18" viewBox="0 0 18 18"><circle cx="9.500" cy="9" r="7.300" fill="#fff" stroke="#2a82d8" stroke-width="1.300"/><path d="M9.500 1.500v15M2.500 9h14M13 3q3 6 0 12" fill="none" stroke="#2a82d8" stroke-width="1.100"/><rect x="6" y="4.500" width="4.500" height="4.500" fill="#5aa0e0" stroke="#2a6cb0" stroke-width=".8"/><rect x="6" y="10" width="4.500" height="4.500" fill="#6fc04a" stroke="#3a8a2a" stroke-width=".8"/><rect x="1.500" y="10" width="4" height="4" fill="#fff" stroke="#888"/></svg>
<div class="tr" style="left:110px;top:505px">WebVisu</div>
<svg style="left:71px;top:524px" width="18" height="18" viewBox="0 0 18 18"><path d="M4.500 1.500h8l3 3v12h-11z" fill="#fff" stroke="#666" stroke-width="1"/><path d="M12.500 1.500v3h3" fill="none" stroke="#666"/><path d="M12 7.500h2M12 9.500h2M12 11.500h2M12 13.500h2" stroke="#888"/><rect x="6" y="5.500" width="4.500" height="4.500" fill="#5aa0e0" stroke="#2a6cb0" stroke-width=".8"/><rect x="6" y="11" width="4.500" height="4.500" fill="#6fc04a" stroke="#3a8a2a" stroke-width=".8"/><rect x="1.500" y="10" width="4" height="4" fill="#fff" stroke="#888"/></svg>
<div class="tr" style="left:90px;top:526px">temp</div>


<!-- EDITOR -->
<!--EDITOR-START--><div class="a" style="left:1365px;top:199px;width:1px;height:795px;background:#9c9c9c"></div>
<div class="a" style="left:306px;top:220px;width:1057px;height:1px;background:#9a9a9a"></div>
<div class="a" style="left:307px;top:197px;width:71px;height:24px;background:#fff;border-right:1px solid #9a9a9a;border-top:2px solid #1f4e8c"></div>
<div class="a" style="left:311.3px;top:202px;color:#2f6096;font-size:10.700px;line-height:14px;transform:scaleX(0.925);transform-origin:0 0">PLC_PRG</div>
<svg style="left:364px;top:204px" width="10" height="10" viewBox="0 0 10 10"><path d="M1 1l8 8M9 1l-8 8" stroke="#333" stroke-width="1.300"/></svg>
<div class="a" style="left:382.5px;top:202px;color:#8a8a8a;font-size:10.700px;line-height:14px;transform:scaleX(1.107);transform-origin:0 0">Library Manager</div>
<svg style="left:475px;top:204px" width="10" height="10" viewBox="0 0 10 10"><path d="M1 1l8 8M9 1l-8 8" stroke="#333" stroke-width="1.300"/></svg>
<div class="a" style="left:488px;top:200px;width:1px;height:18px;background:#8a8a8a"></div>
<div class="a" style="left:493.3px;top:202px;color:#8a8a8a;font-size:10.700px;line-height:14px;transform:scaleX(1.111);transform-origin:0 0">VisualizationManager</div>
<svg style="left:613px;top:204px" width="10" height="10" viewBox="0 0 10 10"><path d="M1 1l8 8M9 1l-8 8" stroke="#333" stroke-width="1.300"/></svg>
<div class="a" style="left:626px;top:200px;width:1px;height:18px;background:#8a8a8a"></div>
<div class="a" style="left:631.3px;top:202px;color:#8a8a8a;font-size:10.700px;line-height:14px;transform:scaleX(1.084);transform-origin:0 0">WebVisu</div>
<svg style="left:684px;top:204px" width="10" height="10" viewBox="0 0 10 10"><path d="M1 1l8 8M9 1l-8 8" stroke="#333" stroke-width="1.300"/></svg>
<div class="a" style="left:697px;top:200px;width:1px;height:18px;background:#8a8a8a"></div>
<div class="a" style="left:702.3px;top:202px;color:#8a8a8a;font-size:10.700px;line-height:14px;transform:scaleX(1.135);transform-origin:0 0">temp</div>
<svg style="left:736px;top:204px" width="10" height="10" viewBox="0 0 10 10"><path d="M1 1l8 8M9 1l-8 8" stroke="#333" stroke-width="1.300"/></svg>
<div class="a" style="left:749px;top:200px;width:1px;height:18px;background:#8a8a8a"></div>
<svg style="left:1353px;top:209px" width="8" height="4"><path d="M0 0h7l-3.500 3.500z" fill="#111"/></svg>
<div class="a" style="left:354px;top:223px;width:2px;height:230px;background:#bcbcbc"></div>
<div class="a" style="left:357px;top:223px;width:16px;height:230px;background:#f0f0f0"></div>
<svg style="left:312px;top:243px" width="10" height="10" viewBox="0 0 10 10"><rect x=".5" y=".5" width="8" height="8" rx="1" fill="#f4f4f4" stroke="#9aa"/><path d="M2.500 4.500h4" stroke="#222" stroke-width="1.200"/></svg>
<div class="ln" style="top:223px">1</div>
<div class="cl" style="top:224px"><span class="kw">PROGRAM</span> PLC_PRG</div>
<div class="ln" style="top:240px">2</div>
<div class="cl" style="top:241px"><span class="kw">VAR</span></div>
<div class="ln" style="top:257px">3</div>
<div class="cl" style="top:258px">    iTemp:<span class="kw">INT;</span></div>
<div class="ln" style="top:274px">4</div>
<div class="cl" style="top:275px">    iTemp1:<span class="kw">INT;</span></div>
<div class="ln" style="top:291px">5</div>
<div class="ln" style="top:308px">6</div>
<div class="cl" style="top:309px">    rReal_temp: <span class="kw">REAL;</span></div>
<div class="ln" style="top:325px">7</div>
<div class="cl" style="top:326px">    rReal_temp1: <span class="kw">REAL;</span></div>
<div class="ln" style="top:342px">8</div>
<div class="ln" style="top:359px">9</div>
<div class="ln" style="top:376px">10</div>
<div class="ln" style="top:393px;color:#b02a3a">11</div>
<div class="ln" style="top:410px">12</div>
<div class="cl" style="top:411px"><span class="kw">END_VAR</span></div>
<div class="a" style="left:1340px;top:223px;width:23px;height:231px;background:linear-gradient(90deg,#fff 0%,#e8e8dc 45%,#c9c9b4 85%,#b4b4a2 100%);border-right:1px solid #8a90b4;border-bottom:1px solid #8a90b4;border-radius:0 2px 3px 0"></div>
<div class="a" style="left:1340px;top:224px;width:19px;height:21px;background:#e6ecfa;border:1px solid #3a5fc0"></div>
<svg style="left:1342px;top:226px" width="15" height="17" viewBox="0 0 15 17"><path d="M1 2.500h10M3 4.500h6M1 6.500h4M3 8.500h9M1 10.500h7M3 12.500h6M1 14.500h9" stroke="#222" stroke-width="1"/><path d="M6 6.500h5M9 12.500h3" stroke="#3a9a3a"/></svg>
<svg style="left:1342px;top:250px" width="15" height="15" viewBox="0 0 17 17"><rect x=".5" y=".5" width="15" height="15" fill="#fff" stroke="#111" stroke-width="1.200"/><rect x="0" y="0" width="16" height="2.500" fill="#0a0af0"/><path d="M1 7.500h14M1 11.500h14M5.500 4v11.500M10.500 4v11.500" stroke="#888"/></svg>
<div class="a" style="left:1271px;top:434px;width:48px;height:20px;background:#f0f0f0;border:1px solid #bdbdbd"></div>
<div class="a c" style="left:1271px;top:438px;width:48px;font-size:11px;line-height:13px;color:#111">100 %</div>
<div class="a" style="left:1319px;top:434px;width:20px;height:20px;background:#f0f0f0;border:1px solid #bdbdbd"></div>
<svg style="left:1320px;top:435px" width="18" height="18" viewBox="0 0 18 18"><path d="M2.500 4.500h7v10h-7z" fill="#d8d8d8" stroke="#111" stroke-width="1.200"/><circle cx="9" cy="6" r="4.300" fill="#eaf6fa" stroke="#111" stroke-width="1.500"/><path d="M7 5h4M7 7h3" stroke="#2ab" stroke-width="1"/><path d="M12 9.500l4.500 5" stroke="#111" stroke-width="2"/></svg>
<div class="a" style="left:307px;top:454px;width:1056px;height:6px;background:#f0f0f0;border:1px solid #a8a8a8"></div>
<svg style="left:821px;top:454px" width="30" height="6" viewBox="0 0 30 6"><path d="M1 5.500l5-4.500 5 4.500z M17 1h10l-5 4.500z" fill="#9a9a9a" stroke="#666" stroke-width=".8"/></svg>
<!--LADDER-START--><div class="a" style="left:357px;top:460px;width:15px;height:485px;background:#f0f0f0"></div>
<div class="a" style="left:372px;top:739px;width:974px;height:206px;background:#ffffe1"></div>
<div class="a" style="left:354px;top:460px;width:2px;height:485px;background:#1f8f86"></div>
<div class="a" style="left:357px;top:504px;width:989px;height:1px;background:#d6d6d6"></div>
<div class="a" style="left:357px;top:585px;width:989px;height:1px;background:#d6d6d6"></div>
<div class="a" style="left:357px;top:738px;width:989px;height:1px;background:#d6d6d6"></div>
<div class="a" style="left:357px;top:945px;width:989px;height:1px;background:#d6d6d6"></div>
<div class="a" style="left:385px;top:460px;width:2px;height:485px;background:#111"></div>
<div class="a mono" style="left:340px;top:505px;width:13px;text-align:right;font-size:11px;line-height:14px;color:#1f8f86">2</div>
<div class="a mono" style="left:340px;top:587px;width:13px;text-align:right;font-size:11px;line-height:14px;color:#1f8f86">3</div>
<div class="a mono" style="left:340px;top:740px;width:13px;text-align:right;font-size:11px;line-height:14px;color:#1f8f86">4</div>
<div class="lt" style="top:462px;left:389.0px;">iTemp</div>
<div class="a" style="left:432px;top:468px;width:17px;height:1px;background:#111"></div>
<div class="a" style="left:449px;top:460px;width:94px;height:26px;background:#e3e9f8;border:1px solid #2f4f8f;border-top:none"></div>
<div class="a" style="left:493px;top:460px;width:5px;height:1px;background:#222"></div>
<div class="lt" style="top:462px;left:452.0px;">iTemp</div>
<div class="a" style="left:543px;top:468px;width:37px;height:1px;background:#111"></div>
<div class="a" style="left:560px;top:467px;width:1px;height:3px;background:#111"></div>
<div class="lt" style="top:462px;left:583.0px;">rReal_temp</div>
<div class="a" style="left:456px;top:524px;width:94px;height:43px;background:#e3e9f8;border:1px solid #2f4f8f"></div>
<div class="lt" style="top:527px;left:469.7px;-webkit-text-stroke:.45px #1c1c1c;">FuAI_Temp</div>
<div class="lt" style="top:543px;left:459.0px;">iTemp</div>
<div class="lt" style="top:543px;left:389.0px;">iTemp1</div>
<div class="a" style="left:439px;top:549px;width:17px;height:1px;background:#111"></div>
<div class="a" style="left:550px;top:549px;width:37px;height:1px;background:#111"></div>
<div class="a" style="left:567px;top:548px;width:1px;height:3px;background:#111"></div>
<div class="lt" style="top:543px;left:590.0px;">rReal_temp1</div>
<div class="q" style="left:618.5px;top:588px">???</div>
<svg style="left:618px;top:599px" width="24" height="3" viewBox="0 0 24 3"><path d="M0 2.500l2-2 2 2 2-2 2 2 2-2 2 2 2-2 2 2 2-2 2 2 2-2 2 2" fill="none" stroke="#e41410" stroke-width="1.100"/></svg>
<div class="a" style="left:502px;top:605px;width:253px;height:115px;background:#e3e9f8;border:1px solid #2f4f8f"></div>
<div class="lt" style="top:608px;left:525.0px;-webkit-text-stroke:.45px #1c1c1c;">FbConfigurationAndStatus_494</div>
<div class="lt" style="top:624px;left:505.0px;">xEnable</div>
<div class="lt" style="top:642px;left:505.0px;">I_Port</div>
<div class="lt" style="top:660px;left:505.0px;">typConfiguration</div>
<div class="lt" style="top:624px;left:706.1px;">xValid</div>
<div class="lt" style="top:642px;left:713.4px;">xBusy</div>
<div class="lt" style="top:660px;left:706.1px;">xError</div>
<div class="lt" style="top:678px;left:698.7px;">oStatus</div>
<div class="lt" style="top:696px;left:654.3px;">typModuleInfo</div>
<div class="a" style="left:386px;top:630px;width:44px;height:1px;background:#111"></div>
<div class="a" style="left:449px;top:630px;width:53px;height:1px;background:#111"></div>
<div class="a" style="left:430px;top:622px;width:4px;height:17px;background:#fff;border:1px solid #2f4f8f"></div>
<div class="a" style="left:445px;top:622px;width:4px;height:17px;background:#fff;border:1px solid #2f4f8f"></div>
<div class="q" style="left:429.5px;top:605px">???</div>
<svg style="left:429px;top:616px" width="24" height="3" viewBox="0 0 24 3"><path d="M0 2.500l2-2 2 2 2-2 2 2 2-2 2 2 2-2 2 2 2-2 2 2 2-2 2 2" fill="none" stroke="#e41410" stroke-width="1.100"/></svg>
<div class="q" style="left:458.5px;top:642px">???</div>
<svg style="left:458px;top:653px" width="24" height="3" viewBox="0 0 24 3"><path d="M0 2.500l2-2 2 2 2-2 2 2 2-2 2 2 2-2 2 2 2-2 2 2 2-2 2 2" fill="none" stroke="#e41410" stroke-width="1.100"/></svg>
<div class="a" style="left:484px;top:648px;width:18px;height:1px;background:#111"></div>
<div class="q" style="left:458.5px;top:660px">???</div>
<svg style="left:458px;top:671px" width="24" height="3" viewBox="0 0 24 3"><path d="M0 2.500l2-2 2 2 2-2 2 2 2-2 2 2 2-2 2 2 2-2 2 2 2-2 2 2" fill="none" stroke="#e41410" stroke-width="1.100"/></svg>
<div class="a" style="left:484px;top:666px;width:18px;height:1px;background:#111"></div>
<div class="a" style="left:755px;top:630px;width:40px;height:1px;background:#111"></div>
<div class="a" style="left:755px;top:648px;width:9px;height:1px;background:#111"></div>
<div class="q" style="left:768.5px;top:642px">???</div>
<svg style="left:768px;top:653px" width="24" height="3" viewBox="0 0 24 3"><path d="M0 2.500l2-2 2 2 2-2 2 2 2-2 2 2 2-2 2 2 2-2 2 2 2-2 2 2" fill="none" stroke="#e41410" stroke-width="1.100"/></svg>
<div class="a" style="left:755px;top:666px;width:9px;height:1px;background:#111"></div>
<div class="q" style="left:768.5px;top:660px">???</div>
<svg style="left:768px;top:671px" width="24" height="3" viewBox="0 0 24 3"><path d="M0 2.500l2-2 2 2 2-2 2 2 2-2 2 2 2-2 2 2 2-2 2 2 2-2 2 2" fill="none" stroke="#e41410" stroke-width="1.100"/></svg>
<div class="a" style="left:755px;top:684px;width:9px;height:1px;background:#111"></div>
<div class="q" style="left:768.5px;top:678px">???</div>
<svg style="left:768px;top:689px" width="24" height="3" viewBox="0 0 24 3"><path d="M0 2.500l2-2 2 2 2-2 2 2 2-2 2 2 2-2 2 2 2-2 2 2 2-2 2 2" fill="none" stroke="#e41410" stroke-width="1.100"/></svg>
<div class="a" style="left:755px;top:702px;width:9px;height:1px;background:#111"></div>
<div class="q" style="left:768.5px;top:696px">???</div>
<svg style="left:768px;top:707px" width="24" height="3" viewBox="0 0 24 3"><path d="M0 2.500l2-2 2 2 2-2 2 2 2-2 2 2 2-2 2 2 2-2 2 2 2-2 2 2" fill="none" stroke="#e41410" stroke-width="1.100"/></svg>
<svg style="left:491px;top:659px" width="11" height="7" viewBox="0 0 11 7"><path d="M1 3.500h9M3 1.500l-2 2 2 2M8 1.500l2 2-2 2" fill="none" stroke="#111" stroke-width="1.100"/></svg>
<div class="a" style="left:546px;top:739px;width:130px;height:18px;background:#fff"></div>
<div class="a" style="left:551px;top:740px;width:119px;height:16px;background:#c6c6fa"></div>
<div class="lt" style="left:551.5px;top:741px;font-size:11.67px">FbAC_Values_494_0</div>
<div class="a" style="left:670px;top:740px;width:2px;height:16px;background:#000"></div>
<div class="a" style="left:688px;top:741px;width:34px;height:14px;background:#fff;border:1px solid #707070;border-radius:3px"></div>
<div class="lt" style="top:740px;left:694.0px;-webkit-text-stroke:.45px #1c1c1c;">...</div>
<div class="a" style="left:502px;top:758px;width:224px;height:169px;background:#e3e9f8;border:1px solid #2f4f8f"></div>
<div class="lt" style="top:761px;left:558.6px;-webkit-text-stroke:.45px #1c1c1c;">FbAC_Values_494</div>
<div class="lt" style="top:777px;left:505.0px;">xEnable</div>
<div class="lt" style="top:795px;left:505.0px;">I_Port</div>
<div class="lt" style="top:813px;left:505.0px;">eAC_Value1</div>
<div class="lt" style="top:831px;left:505.0px;">eAC_Value2</div>
<div class="lt" style="top:849px;left:505.0px;">eAC_Value3</div>
<div class="lt" style="top:867px;left:505.0px;">eAC_Value4</div>
<div class="lt" style="top:777px;left:677.1px;">xValid</div>
<div class="lt" style="top:795px;left:684.4px;">xBusy</div>
<div class="lt" style="top:813px;left:677.1px;">xError</div>
<div class="lt" style="top:831px;left:669.7px;">oStatus</div>
<div class="lt" style="top:849px;left:610.5px;">rMeasuredValue1</div>
<div class="lt" style="top:867px;left:610.5px;">rMeasuredValue2</div>
<div class="lt" style="top:885px;left:610.5px;">rMeasuredValue3</div>
<div class="lt" style="top:903px;left:610.5px;">rMeasuredValue4</div>
<div class="a" style="left:386px;top:783px;width:44px;height:1px;background:#111"></div>
<div class="a" style="left:449px;top:783px;width:53px;height:1px;background:#111"></div>
<div class="a" style="left:430px;top:775px;width:4px;height:17px;background:#fff;border:1px solid #2f4f8f"></div>
<div class="a" style="left:445px;top:775px;width:4px;height:17px;background:#fff;border:1px solid #2f4f8f"></div>
<div class="q" style="left:429.5px;top:758px">???</div>
<svg style="left:429px;top:769px" width="24" height="3" viewBox="0 0 24 3"><path d="M0 2.500l2-2 2 2 2-2 2 2 2-2 2 2 2-2 2 2 2-2 2 2 2-2 2 2" fill="none" stroke="#e41410" stroke-width="1.100"/></svg>
<div class="q" style="left:458.5px;top:795px">???</div>
<svg style="left:458px;top:806px" width="24" height="3" viewBox="0 0 24 3"><path d="M0 2.500l2-2 2 2 2-2 2 2 2-2 2 2 2-2 2 2 2-2 2 2 2-2 2 2" fill="none" stroke="#e41410" stroke-width="1.100"/></svg>
<div class="a" style="left:484px;top:801px;width:18px;height:1px;background:#111"></div>
<div class="q" style="left:458.5px;top:813px">???</div>
<svg style="left:458px;top:824px" width="24" height="3" viewBox="0 0 24 3"><path d="M0 2.500l2-2 2 2 2-2 2 2 2-2 2 2 2-2 2 2 2-2 2 2 2-2 2 2" fill="none" stroke="#e41410" stroke-width="1.100"/></svg>
<div class="a" style="left:484px;top:819px;width:18px;height:1px;background:#111"></div>
<div class="q" style="left:458.5px;top:831px">???</div>
<svg style="left:458px;top:842px" width="24" height="3" viewBox="0 0 24 3"><path d="M0 2.500l2-2 2 2 2-2 2 2 2-2 2 2 2-2 2 2 2-2 2 2 2-2 2 2" fill="none" stroke="#e41410" stroke-width="1.100"/></svg>
<div class="a" style="left:484px;top:837px;width:18px;height:1px;background:#111"></div>
<div class="q" style="left:458.5px;top:849px">???</div>
<svg style="left:458px;top:860px" width="24" height="3" viewBox="0 0 24 3"><path d="M0 2.500l2-2 2 2 2-2 2 2 2-2 2 2 2-2 2 2 2-2 2 2 2-2 2 2" fill="none" stroke="#e41410" stroke-width="1.100"/></svg>
<div class="a" style="left:484px;top:855px;width:18px;height:1px;background:#111"></div>
<div class="q" style="left:458.5px;top:867px">???</div>
<svg style="left:458px;top:878px" width="24" height="3" viewBox="0 0 24 3"><path d="M0 2.500l2-2 2 2 2-2 2 2 2-2 2 2 2-2 2 2 2-2 2 2 2-2 2 2" fill="none" stroke="#e41410" stroke-width="1.100"/></svg>
<div class="a" style="left:484px;top:873px;width:18px;height:1px;background:#111"></div>
<div class="a" style="left:726px;top:783px;width:40px;height:1px;background:#111"></div>
<div class="a" style="left:726px;top:801px;width:9px;height:1px;background:#111"></div>
<div class="q" style="left:739.5px;top:795px">???</div>
<svg style="left:739px;top:806px" width="24" height="3" viewBox="0 0 24 3"><path d="M0 2.500l2-2 2 2 2-2 2 2 2-2 2 2 2-2 2 2 2-2 2 2 2-2 2 2" fill="none" stroke="#e41410" stroke-width="1.100"/></svg>
<div class="a" style="left:726px;top:819px;width:9px;height:1px;background:#111"></div>
<div class="q" style="left:739.5px;top:813px">???</div>
<svg style="left:739px;top:824px" width="24" height="3" viewBox="0 0 24 3"><path d="M0 2.500l2-2 2 2 2-2 2 2 2-2 2 2 2-2 2 2 2-2 2 2 2-2 2 2" fill="none" stroke="#e41410" stroke-width="1.100"/></svg>
<div class="a" style="left:726px;top:837px;width:9px;height:1px;background:#111"></div>
<div class="q" style="left:739.5px;top:831px">???</div>
<svg style="left:739px;top:842px" width="24" height="3" viewBox="0 0 24 3"><path d="M0 2.500l2-2 2 2 2-2 2 2 2-2 2 2 2-2 2 2 2-2 2 2 2-2 2 2" fill="none" stroke="#e41410" stroke-width="1.100"/></svg>
<div class="a" style="left:726px;top:855px;width:9px;height:1px;background:#111"></div>
<div class="q" style="left:739.5px;top:849px">???</div>
<svg style="left:739px;top:860px" width="24" height="3" viewBox="0 0 24 3"><path d="M0 2.500l2-2 2 2 2-2 2 2 2-2 2 2 2-2 2 2 2-2 2 2 2-2 2 2" fill="none" stroke="#e41410" stroke-width="1.100"/></svg>
<div class="a" style="left:726px;top:873px;width:9px;height:1px;background:#111"></div>
<div class="q" style="left:739.5px;top:867px">???</div>
<svg style="left:739px;top:878px" width="24" height="3" viewBox="0 0 24 3"><path d="M0 2.500l2-2 2 2 2-2 2 2 2-2 2 2 2-2 2 2 2-2 2 2 2-2 2 2" fill="none" stroke="#e41410" stroke-width="1.100"/></svg>
<div class="a" style="left:726px;top:891px;width:9px;height:1px;background:#111"></div>
<div class="q" style="left:739.5px;top:885px">???</div>
<svg style="left:739px;top:896px" width="24" height="3" viewBox="0 0 24 3"><path d="M0 2.500l2-2 2 2 2-2 2 2 2-2 2 2 2-2 2 2 2-2 2 2 2-2 2 2" fill="none" stroke="#e41410" stroke-width="1.100"/></svg>
<div class="a" style="left:726px;top:909px;width:9px;height:1px;background:#111"></div>
<div class="q" style="left:739.5px;top:903px">???</div>
<svg style="left:739px;top:914px" width="24" height="3" viewBox="0 0 24 3"><path d="M0 2.500l2-2 2 2 2-2 2 2 2-2 2 2 2-2 2 2 2-2 2 2 2-2 2 2" fill="none" stroke="#e41410" stroke-width="1.100"/></svg>
<div class="a" style="left:1346px;top:460px;width:17px;height:534px;background:#f1f1f1"></div>
<svg style="left:1351px;top:467px" width="8" height="5"><path d="M0 4.500L4 .5 8 4.500z" fill="#555"/></svg>
<div class="a" style="left:1348px;top:510px;width:14px;height:449px;background:linear-gradient(90deg,#f4f4f4,#dcdcdc 50%,#c4c4c8);border:1px solid #9a9a9a;border-radius:2px"></div>
<svg style="left:1351px;top:730px" width="8" height="8"><path d="M0 1.500h7M0 3.500h7M0 5.500h7" stroke="#555" stroke-width="1"/></svg>
<svg style="left:1351px;top:967px" width="8" height="5"><path d="M0 0h8L4 4z" fill="#555"/></svg>
<div class="a" style="left:1201px;top:958px;width:20px;height:20px;background:#fff;border:1px solid #bdbdbd"></div>
<div class="a" style="left:1221px;top:958px;width:20px;height:20px;background:#f0f0f0;border:1px solid #bdbdbd"></div>
<div class="a" style="left:1241px;top:958px;width:20px;height:20px;background:#f0f0f0;border:1px solid #bdbdbd"></div>
<svg style="left:1205px;top:960px" width="12" height="17" viewBox="0 0 12 17"><path d="M1 1v13l3.200-3 2.300 5 2-1-2.300-4.800H10.500z" fill="#000"/></svg>
<svg style="left:1224px;top:961px" width="14" height="14" viewBox="0 0 14 14"><path d="M7 1v12M1 7h12" stroke="#000" stroke-width="1.200"/><path d="M7 0l2 2.500H5zM7 14l2-2.500H5zM0 7l2.500-2v4zM14 7l-2.500-2v4z" fill="#000"/></svg>
<svg style="left:1243px;top:959px" width="17" height="17" viewBox="0 0 17 17"><path d="M9.500 9.500l5.500 5.500" stroke="#c8a040" stroke-width="2.400"/><circle cx="6.500" cy="6.500" r="5" fill="#d8e8f8" stroke="#8aa8c8" stroke-width="1.300"/></svg>
<div class="a" style="left:1281px;top:958px;width:45px;height:20px;background:#f0f0f0;border:1px solid #bdbdbd"></div>
<div class="a c" style="left:1281px;top:962px;width:45px;font-size:11px;line-height:13px;color:#111">100 %</div>
<div class="a" style="left:1326px;top:958px;width:20px;height:20px;background:#f0f0f0;border:1px solid #bdbdbd"></div>
<svg style="left:1327px;top:959px" width="18" height="18" viewBox="0 0 18 18"><path d="M2.500 4.500h7v10h-7z" fill="#d8d8d8" stroke="#111" stroke-width="1.200"/><circle cx="9" cy="6" r="4.300" fill="#eaf6fa" stroke="#111" stroke-width="1.500"/><path d="M7 5h4M7 7h3" stroke="#2ab" stroke-width="1"/><path d="M12 9.500l4.500 5" stroke="#111" stroke-width="2"/></svg>
<div class="a" style="left:307px;top:979px;width:1039px;height:15px;background:#efefef"></div>
<svg style="left:313px;top:982px" width="5" height="9"><path d="M4.500 0v9L0 4.500z" fill="#444"/></svg>
<div class="a" style="left:325px;top:980px;width:30px;height:13px;background:linear-gradient(#f6f6f6,#dcdcdc);border:1px solid #9a9a9a;border-radius:2px"></div>
<svg style="left:336px;top:983px" width="8" height="8"><path d="M1.500 0v7M3.500 0v7M5.500 0v7" stroke="#555" stroke-width="1"/></svg>
<svg style="left:1336px;top:982px" width="5" height="9"><path d="M0 0v9l4.500-4.500z" fill="#444"/></svg>
<!--LADDER-END-->
<!--EDITOR-END-->
<!-- TOOLBOX -->
<!--TOOLBOX-START--><div class="a" style="left:1378px;top:209px;font-size:20px;line-height:26px;color:#3a6ca3;transform:scaleX(0.942);transform-origin:0 0">ToolBox</div>
<svg style="left:1895px;top:209px" width="9" height="12" viewBox="0 0 9 12"><path d="M2.500 1.500h4M3.500 1.500v5.500M5.500 1.500v5.500M1.500 7.500h6M4.500 7.500v4" stroke="#444" stroke-width="1.200" fill="none"/></svg>
<div class="a" style="left:1378px;top:238px;width:530px;height:747px;background:#f0f0f0;border:1px solid #8e9099"></div>
<svg style="left:1385px;top:244px" width="10" height="10" viewBox="0 0 10 10"><rect x=".5" y=".5" width="8" height="8" rx="1" fill="#fcfcfc" stroke="#8fb0b8"/><path d="M1.500 8.800h7.300V1.500" fill="none" stroke="#c8c8c8"/><path d="M2.500 4.500h4" stroke="#000" stroke-width="1.300"/></svg>
<div class="tbb" style="left:1402px;top:242px;transform:scaleX(1.027);transform-origin:0 0">General</div>
<svg style="left:1385px;top:434px" width="10" height="10" viewBox="0 0 10 10"><rect x=".5" y=".5" width="8" height="8" rx="1" fill="#fcfcfc" stroke="#8fb0b8"/><path d="M1.500 8.800h7.300V1.500" fill="none" stroke="#c8c8c8"/><path d="M2.500 4.500h4M4.500 2.500v4" stroke="#000" stroke-width="1.300"/></svg>
<div class="tbb" style="left:1402px;top:432px;transform:scaleX(1.031);transform-origin:0 0">Boolean Operators</div>
<svg style="left:1385px;top:453px" width="10" height="10" viewBox="0 0 10 10"><rect x=".5" y=".5" width="8" height="8" rx="1" fill="#fcfcfc" stroke="#8fb0b8"/><path d="M1.500 8.800h7.300V1.500" fill="none" stroke="#c8c8c8"/><path d="M2.500 4.500h4M4.500 2.500v4" stroke="#000" stroke-width="1.300"/></svg>
<div class="tbb" style="left:1402px;top:451px;transform:scaleX(1.056);transform-origin:0 0">Math operators</div>
<svg style="left:1385px;top:472px" width="10" height="10" viewBox="0 0 10 10"><rect x=".5" y=".5" width="8" height="8" rx="1" fill="#fcfcfc" stroke="#8fb0b8"/><path d="M1.500 8.800h7.300V1.500" fill="none" stroke="#c8c8c8"/><path d="M2.500 4.500h4M4.500 2.500v4" stroke="#000" stroke-width="1.300"/></svg>
<div class="tbb" style="left:1402px;top:470px;transform:scaleX(1.055);transform-origin:0 0">Other Operators</div>
<svg style="left:1385px;top:491px" width="10" height="10" viewBox="0 0 10 10"><rect x=".5" y=".5" width="8" height="8" rx="1" fill="#fcfcfc" stroke="#8fb0b8"/><path d="M1.500 8.800h7.300V1.500" fill="none" stroke="#c8c8c8"/><path d="M2.500 4.500h4M4.500 2.500v4" stroke="#000" stroke-width="1.300"/></svg>
<div class="tbb" style="left:1402px;top:489px;transform:scaleX(0.983);transform-origin:0 0">Function blocks</div>
<svg style="left:1385px;top:510px" width="10" height="10" viewBox="0 0 10 10"><rect x=".5" y=".5" width="8" height="8" rx="1" fill="#fcfcfc" stroke="#8fb0b8"/><path d="M1.500 8.800h7.300V1.500" fill="none" stroke="#c8c8c8"/><path d="M2.500 4.500h4M4.500 2.500v4" stroke="#000" stroke-width="1.300"/></svg>
<div class="tbb" style="left:1402px;top:508px;transform:scaleX(1.036);transform-origin:0 0">Ladder elements</div>
<div class="a" style="left:1420px;top:259px;width:134px;height:19px;background:#f6f6f6;border:1px solid #8a8a8a"></div>
<svg style="left:1420px;top:261px" width="16" height="16" viewBox="0 0 16 16"><path d="M1.500 1v13M1 1.500h14M5.500 7v7M5 13.500h10" stroke="#1a1af0" stroke-width="1.300" fill="none"/><path d="M7 1v6M4 4h6M5 2l4 4M9 2l-4 4" stroke="#e8d820" stroke-width="1"/><path d="M11 4.500h1M13 4.500h1M11 6.500h1M13 6.500h1" stroke="#1a1af0"/></svg>
<div class="tb" style="left:1442px;top:261px;transform:scaleX(1.02);transform-origin:0 0">Network</div>
<svg style="left:1420px;top:280px" width="16" height="16" viewBox="0 0 16 16"><path d="M0 4.500h3M0 7.500h3M0 10.500h3M13 4.500h3M13 7.500h3" stroke="#1a1af0" stroke-width="1.200"/><rect x="3.500" y="2.500" width="9" height="10" fill="#8a90e8" stroke="#1a1af0" stroke-width="1.300"/><text x="8" y="11" font-size="8" font-weight="bold" text-anchor="middle" fill="#e8e040" font-family="Liberation Sans,sans-serif">?</text></svg>
<div class="tb" style="left:1442px;top:280px;transform:scaleX(0.984);transform-origin:0 0">Box</div>
<svg style="left:1420px;top:299px" width="16" height="16" viewBox="0 0 16 16"><path d="M0 4.500h3M0 7.500h3M0 10.500h3M13 4.500h3M13 7.500h3" stroke="#1a1af0" stroke-width="1.200"/><rect x="3.500" y="2.500" width="9" height="10" fill="#8a90e8" stroke="#1a1af0" stroke-width="1.300"/><text x="6.500" y="8" font-size="5.500" font-weight="bold" text-anchor="middle" fill="#e8e040" font-family="Liberation Sans,sans-serif">E</text><text x="9.500" y="12" font-size="6" font-weight="bold" text-anchor="middle" fill="#e8e040" font-family="Liberation Sans,sans-serif">?</text></svg>
<div class="tb" style="left:1442px;top:299px;transform:scaleX(0.937);transform-origin:0 0">Box with EN/ENO</div>
<svg style="left:1420px;top:318px" width="16" height="16" viewBox="0 0 16 16"><path d="M0 8h4" stroke="#1a1af0" stroke-width="1.600"/><text x="4.500" y="10.500" font-size="7" font-weight="bold" fill="#111" font-family="Liberation Mono,monospace" textLength="11.500" lengthAdjust="spacingAndGlyphs">VAR</text></svg>
<div class="tb" style="left:1442px;top:318px;transform:scaleX(0.999);transform-origin:0 0">Assignment</div>
<svg style="left:1420px;top:337px" width="16" height="16" viewBox="0 0 16 16"><path d="M0 7.500h7M7 4l4 3.500-4 3.500z" stroke="#1a1af0" stroke-width="1.200" fill="none"/></svg>
<div class="tb" style="left:1442px;top:337px;transform:scaleX(0.96);transform-origin:0 0">Jump</div>
<svg style="left:1420px;top:356px" width="16" height="16" viewBox="0 0 16 16"><path d="M4 4.500L.8 7.500 4 10.500z" stroke="#1a1af0" stroke-width="1" fill="none"/><text x="5" y="10.500" font-size="7" font-weight="bold" fill="#111" font-family="Liberation Mono,monospace" textLength="11" lengthAdjust="spacingAndGlyphs">RET</text></svg>
<div class="tb" style="left:1442px;top:356px;transform:scaleX(0.956);transform-origin:0 0">Return</div>
<svg style="left:1420px;top:375px" width="16" height="16" viewBox="0 0 16 16"><path d="M13.500 2v12M7 9.500h6.500" stroke="#1a1af0" stroke-width="1.300"/><path d="M6 2v7M2.500 5.500h7M3.500 3l5 5M8.500 3l-5 5" stroke="#d8c820" stroke-width="1"/><path d="M6 4v3M4.500 5.500h3" stroke="#444" stroke-width=".8"/></svg>
<div class="tb" style="left:1442px;top:375px;transform:scaleX(1.056);transform-origin:0 0">Input</div>
<svg style="left:1420px;top:394px" width="16" height="16" viewBox="0 0 16 16"><path d="M1 4.500h14M7.500 4.500v8.500h7" stroke="#1a1af0" stroke-width="1.300" fill="none"/><rect x="6.500" y="3.500" width="2" height="2" fill="#1a1af0"/></svg>
<div class="tb" style="left:1442px;top:394px;transform:scaleX(0.933);transform-origin:0 0">Branch</div>
<svg style="left:1420px;top:413px" width="16" height="16" viewBox="0 0 16 16"><path d="M0 4.500h16" stroke="#1a1af0" stroke-width="1.200"/><rect x="3.500" y="2.500" width="9" height="11" fill="#2a3ad8" stroke="#1a1af0" stroke-width="1.300"/><text x="6.500" y="8" font-size="5.500" font-weight="bold" text-anchor="middle" fill="#fff" font-family="Liberation Sans,sans-serif">E</text><text x="9.800" y="12.500" font-size="5.500" font-weight="bold" text-anchor="middle" fill="#fff" font-family="Liberation Sans,sans-serif">x</text></svg>
<div class="tb" style="left:1442px;top:413px;transform:scaleX(0.915);transform-origin:0 0">Execute</div>
<!--TOOLBOX-END-->
<!-- BOTTOM -->
<!--BOTTOM-START--><div class="a" style="left:5px;top:995px;width:1911px;height:1px;background:#a0a0a0"></div>
<div class="a" style="left:8px;top:1000px;font-size:10.700px;line-height:15px;color:#8a8a8a;transform:scaleX(1.066);transform-origin:0 0">Messages</div>
<svg style="left:64px;top:1002px" width="10" height="10" viewBox="0 0 10 10"><path d="M1 1l8 8M9 1l-8 8" stroke="#333" stroke-width="1.300"/></svg>
<div class="a" style="left:80px;top:998px;width:1px;height:18px;background:#8a8a8a"></div>
<div class="a" style="left:0;top:1018px;width:1920px;height:22px;background:#58a828"></div>
<svg style="left:1604px;top:1022px" width="16" height="14" viewBox="0 0 16 14"><path d="M2 3.500h2.500v7H2q-1.500 0-1.500-1.500v-4q0-1.500 1.500-1.500z" fill="#e03a2a" stroke="#fff" stroke-width=".7"/><path d="M5.800 1.500v11" stroke="#e03a2a" stroke-width="1.800"/><path d="M9.800 1.500v11" stroke="#e03a2a" stroke-width="1.800"/><path d="M11 3.500h1.500q1.500 0 1.500 1.500v4q0 1.500-1.500 1.500H11z" fill="#e03a2a" stroke="#fff" stroke-width=".7"/><path d="M14 7h2M7 5h1.500M7 9h1.500" stroke="#fff" stroke-width="1"/></svg>
<div class="a" style="left:1623px;top:1022px;font-size:11.700px;line-height:16px;color:#fff;transform:scaleX(1.022);transform-origin:0 0">Connection</div>
<svg style="left:1699px;top:1020px" width="18" height="18" viewBox="0 0 18 18"><path d="M1.500 1.500h13.500v10h-13.500z" fill="#eee" stroke="#666"/><path d="M3 4h1.500M6 4h1.500M9 4h1.500M12 4h1.500M4.500 6.500h1.500M7.500 6.500h1.500" stroke="#444" stroke-width="1.500"/><circle cx="11.500" cy="12" r="5" fill="#d93a2a" stroke="#fff" stroke-width=".8"/><rect x="10.800" y="8.800" width="1.500" height="4" fill="#fff"/><rect x="10.800" y="13.600" width="1.500" height="1.500" fill="#fff"/></svg>
<div class="a" style="left:1719px;top:1022px;font-size:11.700px;line-height:16px;color:#fff;transform:scaleX(0.998);transform-origin:0 0">Last build: 12:47:46 AM</div>
<svg style="left:1848px;top:1020px" width="18" height="18" viewBox="0 0 18 18"><path d="M1 5l9-2.500 2 0v9H1z" fill="#d8ecd0" stroke="#eee" stroke-width=".8"/><path d="M8 1.500h5v4h-5z" fill="none" stroke="#eee"/><text x="2.500" y="10.500" font-size="8" font-style="italic" font-weight="bold" fill="#58a828" font-family="Liberation Sans,sans-serif">e</text><circle cx="12" cy="13" r="4.500" fill="#8a8a8a" stroke="#fff" stroke-width=".8"/><rect x="11.300" y="10" width="1.500" height="1.500" fill="#fff"/><rect x="11.300" y="12.300" width="1.500" height="3.600" fill="#fff"/></svg>
<div class="a" style="left:1867px;top:1022px;font-size:11.700px;line-height:16px;color:#fff;transform:scaleX(1.002);transform-origin:0 0">Version: -</div>
<div class="a" style="left:0;top:1040px;width:1920px;height:40px;background:linear-gradient(90deg,#7e95b4 0,#8ba2c2 40px,#a9c0dd 90px,#a9c0dd 1670px,#8496ae 1694px,#8496ae 1920px);border-top:1px solid #3c4859"></div>
<div class="a" style="left:0;top:1041px;width:1920px;height:1px;background:rgba(255,255,255,.35)"></div>
<svg style="left:7px;top:1041px" width="40" height="39" viewBox="0 0 40 39"><defs><radialGradient id="orb" cx=".5" cy=".25" r=".8"><stop offset="0" stop-color="#9fd0f0"/><stop offset=".45" stop-color="#2f7fc0"/><stop offset="1" stop-color="#0a2f66"/></radialGradient></defs><circle cx="19.500" cy="19" r="18.300" fill="url(#orb)" stroke="#20406a" stroke-width=".8"/><path d="M4 22a16 16 0 0 0 31 0q-15 12-31 0z" fill="#35b8e8" opacity=".7"/><path d="M11.500 11.500q4-2 7.500 0l-1.300 6.500q-3.500-2-7.500 0z" fill="#e8532a"/><path d="M20.500 12q4 2 7.800 0l-1.300 6.500q-4 2-7.800 0z" fill="#7cc043"/><path d="M10 19.500q4-2 7.500 0l-1.300 6.500q-3.500-2-7.500 0z" fill="#3d9be0"/><path d="M19 20q4 2 7.800 0l-1.300 6.500q-4 2-7.800 0z" fill="#f8c828"/></svg>
<svg style="left:58px;top:1045px" width="9" height="31" viewBox="0 0 9 31"><g fill="#2c3a4e"><rect x="0" y="0" width="1.600" height="1.600"/><rect x="0" y="3" width="1.600" height="1.600"/><rect x="0" y="6" width="1.600" height="1.600"/><rect x="0" y="9" width="1.600" height="1.600"/><rect x="0" y="12" width="1.600" height="1.600"/><rect x="0" y="15" width="1.600" height="1.600"/><rect x="0" y="18" width="1.600" height="1.600"/><rect x="0" y="21" width="1.600" height="1.600"/><rect x="0" y="24" width="1.600" height="1.600"/><rect x="0" y="27" width="1.600" height="1.600"/><rect x="3" y="0" width="1.600" height="1.600"/><rect x="3" y="3" width="1.600" height="1.600"/><rect x="3" y="6" width="1.600" height="1.600"/><rect x="3" y="9" width="1.600" height="1.600"/><rect x="3" y="12" width="1.600" height="1.600"/><rect x="3" y="15" width="1.600" height="1.600"/><rect x="3" y="18" width="1.600" height="1.600"/><rect x="3" y="21" width="1.600" height="1.600"/><rect x="3" y="24" width="1.600" height="1.600"/><rect x="3" y="27" width="1.600" height="1.600"/><rect x="6" y="0" width="1.600" height="1.600"/><rect x="6" y="3" width="1.600" height="1.600"/><rect x="6" y="6" width="1.600" height="1.600"/><rect x="6" y="9" width="1.600" height="1.600"/><rect x="6" y="12" width="1.600" height="1.600"/><rect x="6" y="15" width="1.600" height="1.600"/><rect x="6" y="18" width="1.600" height="1.600"/><rect x="6" y="21" width="1.600" height="1.600"/><rect x="6" y="24" width="1.600" height="1.600"/><rect x="6" y="27" width="1.600" height="1.600"/></g></svg>
<svg style="left:1709px;top:1045px" width="9" height="31" viewBox="0 0 9 31"><g fill="#2c3a4e"><rect x="0" y="0" width="1.600" height="1.600"/><rect x="0" y="3" width="1.600" height="1.600"/><rect x="0" y="6" width="1.600" height="1.600"/><rect x="0" y="9" width="1.600" height="1.600"/><rect x="0" y="12" width="1.600" height="1.600"/><rect x="0" y="15" width="1.600" height="1.600"/><rect x="0" y="18" width="1.600" height="1.600"/><rect x="0" y="21" width="1.600" height="1.600"/><rect x="0" y="24" width="1.600" height="1.600"/><rect x="0" y="27" width="1.600" height="1.600"/><rect x="3" y="0" width="1.600" height="1.600"/><rect x="3" y="3" width="1.600" height="1.600"/><rect x="3" y="6" width="1.600" height="1.600"/><rect x="3" y="9" width="1.600" height="1.600"/><rect x="3" y="12" width="1.600" height="1.600"/><rect x="3" y="15" width="1.600" height="1.600"/><rect x="3" y="18" width="1.600" height="1.600"/><rect x="3" y="21" width="1.600" height="1.600"/><rect x="3" y="24" width="1.600" height="1.600"/><rect x="3" y="27" width="1.600" height="1.600"/><rect x="6" y="0" width="1.600" height="1.600"/><rect x="6" y="3" width="1.600" height="1.600"/><rect x="6" y="6" width="1.600" height="1.600"/><rect x="6" y="9" width="1.600" height="1.600"/><rect x="6" y="12" width="1.600" height="1.600"/><rect x="6" y="15" width="1.600" height="1.600"/><rect x="6" y="18" width="1.600" height="1.600"/><rect x="6" y="21" width="1.600" height="1.600"/><rect x="6" y="24" width="1.600" height="1.600"/><rect x="6" y="27" width="1.600" height="1.600"/></g></svg>
<div class="a" style="left:138px;top:1041px;width:58px;height:39px;background:linear-gradient(135deg,#d2dff0,#b5c9e3 50%,#a9c0de);border:1px solid #56667c;border-radius:3px;box-shadow:inset 0 0 0 1px rgba(255,255,255,.55)"></div>
<div class="a" style="left:376px;top:1041px;width:8px;height:39px;background:linear-gradient(#c3d4ea,#a6bddb);border:1px solid #6f839d;border-radius:3px"></div>
<div class="a" style="left:372px;top:1041px;width:8px;height:39px;background:linear-gradient(#c3d4ea,#a6bddb);border:1px solid #6f839d;border-radius:3px"></div>
<div class="a" style="left:323px;top:1041px;width:51px;height:39px;background:linear-gradient(135deg,#d2dff0,#b5c9e3 50%,#a9c0de);border:1px solid #56667c;border-radius:3px;box-shadow:inset 0 0 0 1px rgba(255,255,255,.55)"></div>
<div class="a" style="left:386px;top:1041px;width:58px;height:39px;background:linear-gradient(135deg,#d2dff0,#b5c9e3 50%,#a9c0de);border:1px solid #56667c;border-radius:3px;box-shadow:inset 0 0 0 1px rgba(255,255,255,.55)"></div>
<div class="a" style="left:499px;top:1041px;width:8px;height:39px;background:linear-gradient(#c3d4ea,#a6bddb);border:1px solid #6f839d;border-radius:3px"></div>
<div class="a" style="left:448px;top:1041px;width:53px;height:39px;background:linear-gradient(135deg,#d2dff0,#b5c9e3 50%,#a9c0de);border:1px solid #56667c;border-radius:3px;box-shadow:inset 0 0 0 1px rgba(255,255,255,.55)"></div>
<div class="a" style="left:562px;top:1041px;width:8px;height:39px;background:linear-gradient(#c3d4ea,#a6bddb);border:1px solid #6f839d;border-radius:3px"></div>
<div class="a" style="left:558px;top:1041px;width:8px;height:39px;background:linear-gradient(#c3d4ea,#a6bddb);border:1px solid #6f839d;border-radius:3px"></div>
<div class="a" style="left:510px;top:1041px;width:50px;height:39px;background:linear-gradient(135deg,#d2dff0,#b5c9e3 50%,#a9c0de);border:1px solid #56667c;border-radius:3px;box-shadow:inset 0 0 0 1px rgba(255,255,255,.55)"></div>
<div class="a" style="left:624px;top:1041px;width:8px;height:39px;background:linear-gradient(#c3d4ea,#a6bddb);border:1px solid #6f839d;border-radius:3px"></div>
<div class="a" style="left:620px;top:1041px;width:8px;height:39px;background:linear-gradient(#c3d4ea,#a6bddb);border:1px solid #6f839d;border-radius:3px"></div>
<div class="a" style="left:572px;top:1041px;width:50px;height:39px;background:linear-gradient(135deg,#d2dff0,#b5c9e3 50%,#a9c0de);border:1px solid #56667c;border-radius:3px;box-shadow:inset 0 0 0 1px rgba(255,255,255,.55)"></div>
<div class="a" style="left:690px;top:1041px;width:8px;height:39px;background:linear-gradient(#c3d4ea,#a6bddb);border:1px solid #6f839d;border-radius:3px"></div>
<div class="a" style="left:686px;top:1041px;width:8px;height:39px;background:linear-gradient(#c3d4ea,#a6bddb);border:1px solid #6f839d;border-radius:3px"></div>
<div class="a" style="left:633px;top:1041px;width:55px;height:39px;background:linear-gradient(135deg,#d2dff0,#b5c9e3 50%,#a9c0de);border:1px solid #56667c;border-radius:3px;box-shadow:inset 0 0 0 1px rgba(255,255,255,.55)"></div>
<div class="a" style="left:696px;top:1041px;width:58px;height:39px;background:linear-gradient(135deg,#d2dff0,#b5c9e3 50%,#a9c0de);border:1px solid #56667c;border-radius:3px;box-shadow:inset 0 0 0 1px rgba(255,255,255,.55)"></div>
<div class="a" style="left:758px;top:1041px;width:58px;height:39px;background:linear-gradient(135deg,#d2dff0,#b5c9e3 50%,#a9c0de);border:1px solid #56667c;border-radius:3px;box-shadow:inset 0 0 0 1px rgba(255,255,255,.55)"></div>
<div class="a" style="left:820px;top:1041px;width:58px;height:39px;background:linear-gradient(135deg,#d2dff0,#b5c9e3 50%,#a9c0de);border:1px solid #56667c;border-radius:3px;box-shadow:inset 0 0 0 1px rgba(255,255,255,.55)"></div>
<div class="a" style="left:882px;top:1041px;width:58px;height:39px;background:linear-gradient(135deg,#e6eef8,#cfddef 50%,#c2d3ea);border:1px solid #56667c;border-radius:3px;box-shadow:inset 0 0 0 1px rgba(255,255,255,.55)"></div>
<div class="a" style="left:944px;top:1041px;width:58px;height:39px;background:linear-gradient(135deg,#d2dff0,#b5c9e3 50%,#a9c0de);border:1px solid #56667c;border-radius:3px;box-shadow:inset 0 0 0 1px rgba(255,255,255,.55)"></div>
<div class="a" style="left:1006px;top:1041px;width:58px;height:39px;background:linear-gradient(135deg,#d2dff0,#b5c9e3 50%,#a9c0de);border:1px solid #56667c;border-radius:3px;box-shadow:inset 0 0 0 1px rgba(255,255,255,.55)"></div>
<svg style="left:86px;top:1042px" width="38" height="36" viewBox="0 0 38 36"><text x="4" y="32" font-size="52" font-weight="bold" fill="#2a9ae6" font-family="Liberation Sans,sans-serif" stroke="#c8e8fb" stroke-width=".8">e</text><path d="M6 31C-3 22 14 2 33 3.500" fill="none" stroke="#f2c22a" stroke-width="2.400"/><path d="M33 3.500q4 2-1 11" fill="none" stroke="#f2c22a" stroke-width="1.800"/></svg>
<svg style="left:150px;top:1045px" width="34" height="32" viewBox="0 0 34 32"><path d="M2 6l2-3h9l2 3h16v20H2z" fill="#f0d67a" stroke="#c9a94a"/><rect x="4" y="3" width="4" height="2" fill="#3aa03a"/><rect x="13" y="5.500" width="4" height="2" fill="#d03a3a"/><rect x="22" y="7" width="4" height="2" fill="#3a80d0"/><path d="M2 12h29v14H2z" fill="#f6e6a6" stroke="#d4b85a"/><path d="M6 30V20q0-2 2-2h16q2 0 2 2v10h-5v-6H11v6z" fill="#5aa8e0" stroke="#cfe8fa" stroke-width="1"/></svg>
<svg style="left:212px;top:1047px" width="34" height="30" viewBox="0 0 34 30"><path d="M6 2l22 2v22l-22 2z" fill="#9fc4e6" opacity=".8"/><path d="M3 3h22v24H3z" fill="#b9d6f0" stroke="#7aa8d4"/><circle cx="14" cy="15" r="8.500" fill="#f28a1e" stroke="#fbd6a8" stroke-width="1.200"/><path d="M11 10v10l8.500-5z" fill="#fff"/></svg>
<svg style="left:277px;top:1045px" width="26" height="32" viewBox="0 0 26 32"><rect x="1.500" y="1.500" width="22" height="28" rx="2" fill="#cfe0f4" stroke="#6a94c4"/><rect x="4" y="4" width="17" height="7" fill="#eef4fb" stroke="#8ab"/><rect x="4" y="3.500" width="17" height="1.500" fill="#f2a040"/><text x="19.500" y="10.500" font-size="7" text-anchor="end" fill="#3a6aa0" font-family="Liberation Mono,monospace">0</text><g fill="#f8fbff" stroke="#7a9cc4" stroke-width=".6"><rect x="4" y="13.500" width="3" height="3"/><rect x="8.500" y="13.500" width="3" height="3"/><rect x="13" y="13.500" width="3" height="3"/><rect x="17.500" y="13.500" width="3" height="3"/><rect x="4" y="18" width="3" height="3"/><rect x="8.500" y="18" width="3" height="3"/><rect x="13" y="18" width="3" height="3"/><rect x="4" y="22.500" width="3" height="3"/><rect x="8.500" y="22.500" width="3" height="3"/><rect x="13" y="22.500" width="3" height="3"/></g><rect x="17.500" y="18" width="3" height="7.500" fill="#f2a040"/></svg>
<svg style="left:331px;top:1044px" width="36" height="34" viewBox="0 0 36 34"><path d="M3 4q10-3 19-2v24H3z" fill="#f4faf0" stroke="#4ea72a" stroke-width="1.300"/><path d="M9 8l23 3-2 20-23-3z" fill="#eef6e8" stroke="#b8d4a8"/><g fill="#5f9a3f"><path d="M21 12l9 1.200-.5 4.500-9-1.200zM20 19l9 1.200-.5 4.500-9-1.200zM19.500 26l9 1.200-.3 3-9-1.200zM10 18l8 1-.5 4.500-8-1zM9.500 25l8 1-.3 3-8-1z"/></g><path d="M5 7h16v10H5z" fill="#f4faf0"/><text x="6" y="18" font-size="14" font-weight="bold" font-style="italic" fill="#2f6a1f" font-family="Liberation Sans,sans-serif" textLength="15" lengthAdjust="spacingAndGlyphs">X</text></svg>
<svg style="left:399px;top:1045px" width="32" height="32" viewBox="0 0 32 32"><circle cx="16" cy="16" r="14.500" fill="#e8453a"/><path d="M16 16L3.500 8.700A14.500 14.500 0 0 0 13.500 30.300z" fill="#2aa052"/><path d="M16 16l-2.500 14.300A14.500 14.500 0 0 0 30.300 13.500L16 10z" fill="#f8c21e"/><path d="M3.500 8.700A14.500 14.500 0 0 1 30.300 13.500L16 10.500z" fill="#e8453a"/><circle cx="16" cy="16" r="6.500" fill="#fff"/><circle cx="16" cy="16" r="5.200" fill="#4a8af4"/></svg>
<svg style="left:457px;top:1043px" width="36" height="36" viewBox="0 0 36 36"><path d="M3 4q11-3 21-2v24H3z" fill="#fdf6e6" stroke="#f0a02a" stroke-width="1.400"/><path d="M10 12l23-3 0 18-23 3z" fill="#fbfbf6" stroke="#c8c0a8"/><path d="M10 12l12 9 11-12" fill="none" stroke="#c8c0a8"/><circle cx="18" cy="22" r="8.500" fill="#f8c83a" stroke="#d89a1a" stroke-width="1.200"/><circle cx="18" cy="22" r="6" fill="#fbdc7a"/><path d="M14 18.500l4 3.500 5-3" fill="none" stroke="#a87a1a" stroke-width="1.300"/></svg>
<svg style="left:519px;top:1045px" width="32" height="32" viewBox="0 0 32 32"><circle cx="16" cy="16" r="15.500" fill="#0fa7e8"/><text x="16" y="22.500" font-size="17" font-weight="bold" text-anchor="middle" fill="#fff" font-family="Liberation Sans,sans-serif">Fa</text></svg>
<svg style="left:583px;top:1045px" width="30" height="30" viewBox="0 0 30 30"><rect x="1" y="1" width="27" height="27" fill="#2a0a0e" stroke="#e8201a" stroke-width="2"/><path d="M7 22q5-4 7.500-15 1 .5 0 4-1 5 8.500 8-8-1-16 3z" fill="none" stroke="#fff" stroke-width="1.200"/></svg>
<svg style="left:645px;top:1044px" width="32" height="34" viewBox="0 0 32 34"><path d="M15 20l6-3 6 3v7l-6 3.500-6-3.500z" fill="#12d41a" stroke="#0a7a10" stroke-width=".8"/><path d="M9 13l6-3 6 3v7l-6 3.500L9 20z" fill="#f4f41a" stroke="#8a8a10" stroke-width=".8"/><path d="M2 5.500L9 2l7 3.500v8L9 17.500 2 13.500z" fill="#f41212" stroke="#8a0a0a" stroke-width=".8"/></svg>
<svg style="left:707px;top:1043px" width="36" height="36" viewBox="0 0 36 36"><rect x="4" y="5" width="12" height="10" fill="#9aa4b0" stroke="#666"/><rect x="20" y="3" width="12" height="10" fill="#3ab4f0" stroke="#567"/><path d="M4 27h28" stroke="#d8b870" stroke-width="2"/><circle cx="15" cy="19" r="8.500" fill="#b8e0fa" stroke="#4a9ae0" stroke-width="2"/><circle cx="13" cy="17" r="3.500" fill="#e8f6ff" opacity=".8"/><path d="M9 26l-6 7" stroke="#e8b020" stroke-width="3.500" stroke-linecap="round"/></svg>
<svg style="left:768px;top:1046px" width="38" height="30" viewBox="0 0 38 30"><path d="M3 7l9-5h22l-7 5z" fill="#b868b8"/><path d="M3 7h24l7-5v7l-7 5H3z" fill="#8a3a8a" stroke="#3a1a3a" stroke-width=".8"/><path d="M3 15h24l7-5v7l-7 5H3z" fill="#2a3ad0" stroke="#10186a" stroke-width=".8"/><path d="M3 22.500h24l7-5v6.500l-7 5H3z" fill="#1a8a2a" stroke="#0a4a12" stroke-width=".8"/><path d="M16 2h5l-1.500 27h-4z" fill="#c89040" stroke="#6a4a1a" stroke-width=".6"/><rect x="15" y="13" width="5" height="5" fill="#ddd" stroke="#333" stroke-width=".8"/></svg>
<svg style="left:832px;top:1043px" width="36" height="36" viewBox="0 0 36 36"><path d="M16 5l15-4v20l-15 3z" fill="#6f94c4" stroke="#dfe8f4" stroke-width="1.200"/><path d="M5 22V10h8" fill="none" stroke="#6a94c8" stroke-width="2.200"/><rect x="12" y="8" width="3" height="5" fill="#9ab"/><rect x="2" y="22" width="28" height="12" fill="#d8dde4" stroke="#98a2b0" stroke-width=".8"/><path d="M9 22v12M13 22v12M17 22v12M21 22v12M25 22v12" stroke="#98a2b0"/><path d="M10 27h18M10 30h18" stroke="#7ab0e0" stroke-width="1.500" stroke-dasharray="2 2"/><rect x="3.500" y="25" width="3" height="2" fill="#d03a3a"/></svg>
<svg style="left:895px;top:1043px" width="32" height="34" viewBox="0 0 32 34"><path d="M7 7h24l-6 25H1z" fill="#44b03a"/><text x="4" y="30" font-size="27" font-style="italic" fill="#fff" font-family="Liberation Sans,sans-serif">e</text><path d="M27.500 1L23 23h-2.500L24 1z" fill="#fff"/><circle cx="20.500" cy="28" r="2.200" fill="#fff"/></svg>
<svg style="left:956px;top:1043px" width="34" height="36" viewBox="0 0 34 36"><path d="M4 3v28h27" fill="none" stroke="#444" stroke-width="1.200"/><path d="M4 1l-2 3h4zM33 31l-3-2v4z" fill="#444"/><path d="M4 26l6-8 6 10 8-18 5-5" fill="none" stroke="#444" stroke-width="1.200"/><rect x="11" y="2" width="5" height="31" fill="#e8ecf2" stroke="#555" stroke-width=".8"/><rect x="19" y="2" width="5" height="31" fill="#e8ecf2" stroke="#555" stroke-width=".8"/><path d="M13.500 4v26M21.500 4v26" stroke="#3a8ad8" stroke-width="3" stroke-dasharray="2.500 1.500"/><path d="M13.500 6v3M21.500 6v3" stroke="#4ab04a" stroke-width="3"/></svg>
<svg style="left:1016px;top:1043px" width="38" height="36" viewBox="0 0 38 36"><path d="M3 5q11-3 21-2v26H3z" fill="#e6eefa" stroke="#2a5ab0" stroke-width="1.500"/><path d="M12 7l22-1.500 1 25-22 1.500z" fill="#fff" stroke="#a8b8d0"/><text x="17" y="16.500" font-size="11" font-weight="bold" font-style="italic" fill="#2a4a9a" font-family="Liberation Sans,sans-serif">W</text><path d="M28 10.500l5-.4M28 13l5-.4M28 15.500l5-.4M16 19.500l17-1M16 22.500l17-1M16 25.500l17-1" stroke="#2a4a9a" stroke-width="1.300"/></svg>
<div class="a" style="left:1727px;top:1051px;font-size:12px;line-height:14px;color:#fff;transform:scaleX(0.844);transform-origin:0 0">FR</div>
<svg style="left:1757px;top:1058px" width="10" height="6"><path d="M0 5.500L4.500 .5 9 5.500z" fill="#fff"/></svg>
<svg style="left:1776px;top:1052px" width="20" height="18" viewBox="0 0 20 18"><path d="M2.500 1v16" stroke="#fff" stroke-width="1.600"/><path d="M4 2q4-2 6 0t6 0v8q-3 2-6 0t-6 0z" fill="#fff" stroke="#d8d8d8" stroke-width=".6"/><circle cx="12.500" cy="12" r="4.800" fill="#e0342a" stroke="#fff" stroke-width=".6"/><path d="M10.500 10l4 4M14.500 10l-4 4" stroke="#fff" stroke-width="1.400"/></svg>
<svg style="left:1801px;top:1052px" width="18" height="18" viewBox="0 0 18 18"><rect x="5.500" y="3.500" width="10" height="9" fill="#5a6a7c" stroke="#fff" stroke-width="1.200"/><path d="M7 15.500h8M10.500 12.500v3" stroke="#fff" stroke-width="1.300"/><path d="M2.500 1v5M1 2.500v3.500h3.500V2.500M2.500 6v9.500h4" fill="none" stroke="#fff" stroke-width="1.200"/></svg>
<div class="a c" style="left:1825px;top:1046px;width:80px;font-size:11.500px;line-height:15px;color:#fff;transform:scaleX(0.956)">01:15</div>
<div class="a c" style="left:1815px;top:1063px;width:100px;font-size:11.500px;line-height:15px;color:#fff;transform:scaleX(1.008)">24/12/2017</div>
<div class="a" style="left:1906px;top:1041px;width:15px;height:39px;background:linear-gradient(135deg,#aab8cc,#7f90a8 60%,#8a9ab2);border:1px solid #4a5a72;box-shadow:inset 0 0 0 1px rgba(255,255,255,.35)"></div>
<!--BOTTOM-END-->
</body>
</html>
